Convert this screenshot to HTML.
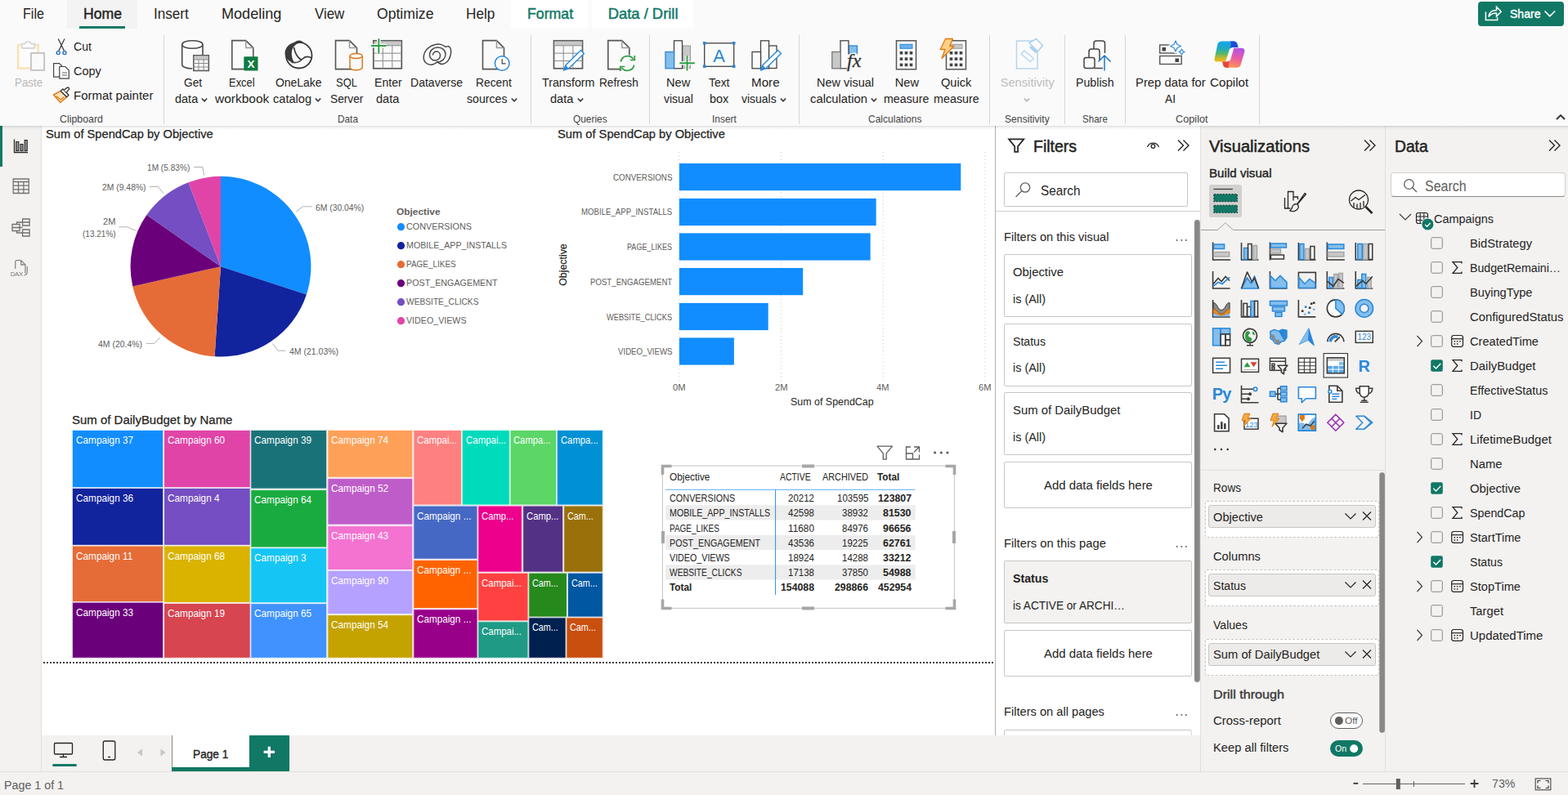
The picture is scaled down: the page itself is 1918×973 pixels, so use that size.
<!DOCTYPE html>
<html lang="en"><head><meta charset="utf-8"><title>Power BI Desktop</title>
<style>
html,body{margin:0;padding:0;}
body{width:1918px;height:973px;overflow:hidden;position:relative;background:#f3f2f1;font-family:"Liberation Sans",sans-serif;color:#252423;}
.b{position:absolute;display:block;}
.t{position:absolute;white-space:nowrap;line-height:1;transform-origin:0 0;}





</style></head>
<body>
<!-- ribbon -->
<div class="b" style="left:0px;top:0px;width:1918px;height:35px;background:#fafafa;"></div>
<div class="b" style="left:82px;top:0px;width:85.5px;height:35px;background:#f3f3f3;"></div>
<div class="b" style="left:625px;top:0px;width:94px;height:35px;background:#fff;"></div>
<div class="b" style="left:724px;top:0px;width:124px;height:35px;background:#fff;"></div>
<div class="b" style="left:0px;top:35px;width:1918px;height:119px;background:#fafafa;"></div>
<div class="t" style="left:28.3px;top:8px;font-size:18.4px;transform:scaleX(0.874);">File</div>
<div class="t" style="left:101.7px;top:8px;font-size:18.4px;-webkit-text-stroke:0.45px #252423;transform:scaleX(0.96);">Home</div>
<div class="b" style="left:97px;top:32.2px;width:56px;height:2.8px;background:#117865;"></div>
<div class="t" style="left:188px;top:8px;font-size:18.4px;transform:scaleX(0.928);">Insert</div>
<div class="t" style="left:271.3px;top:8px;font-size:18.4px;transform:scaleX(0.983);">Modeling</div>
<div class="t" style="left:384.7px;top:8px;font-size:18.4px;transform:scaleX(0.918);">View</div>
<div class="t" style="left:460.5px;top:8px;font-size:18.4px;transform:scaleX(0.957);">Optimize</div>
<div class="t" style="left:570px;top:8px;font-size:18.4px;transform:scaleX(0.933);">Help</div>
<div class="t" style="left:644.5px;top:8px;font-size:18.4px;color:#117865;-webkit-text-stroke:0.45px #117865;transform:scaleX(0.964);">Format</div>
<div class="t" style="left:743.7px;top:8px;font-size:18.4px;color:#117865;-webkit-text-stroke:0.45px #117865;">Data / Drill</div>
<div class="b" style="left:1807.7px;top:2px;width:105px;height:29.7px;background:#117865;border-radius:4px;"></div>
<div class="t" style="left:1846.8px;top:10px;font-size:14.8px;color:#fff;-webkit-text-stroke:0.4px #fff;transform:scaleX(0.949);">Share</div>
<svg class="b" style="left:1815px;top:4.5px;" width="22" height="22" viewBox="0 0 22 22"><path d="M2.400 9.500v10h14.300v-3.200M6 15.500c0.500-5 4-8 9.500-8v-4.200l5.700 5.900-5.700 5.900v-4.200c-4.500 0-7.500 1.500-9.500 4.600z" fill="none" stroke="#fff" stroke-width="1.500"/></svg>
<svg class="b" style="left:1888px;top:10px;" width="16" height="14" viewBox="0 0 16 14"><path d="M1.5 3.5l6.3 6.3 6.3-6.3" fill="none" stroke="#fff" stroke-width="1.7"/></svg>
<svg class="b" style="left:1902px;top:138px;" width="14" height="10" viewBox="0 0 14 10"><path d="M2 8l5-5 5 5" fill="none" stroke="#333" stroke-width="1.9"/></svg>
<div class="b" style="left:199.7px;top:42.5px;width:1px;height:109px;background:#d6d6d6;"></div>
<div class="b" style="left:649.2px;top:42.5px;width:1px;height:109px;background:#d6d6d6;"></div>
<div class="b" style="left:794px;top:42.5px;width:1px;height:109px;background:#d6d6d6;"></div>
<div class="b" style="left:977px;top:42.5px;width:1px;height:109px;background:#d6d6d6;"></div>
<div class="b" style="left:1209.8px;top:42.5px;width:1px;height:109px;background:#d6d6d6;"></div>
<div class="b" style="left:1302px;top:42.5px;width:1px;height:109px;background:#d6d6d6;"></div>
<div class="b" style="left:1375.8px;top:42.5px;width:1px;height:109px;background:#d6d6d6;"></div>
<div class="b" style="left:1539.7px;top:42.5px;width:1px;height:109px;background:#d6d6d6;"></div>
<div class="t" style="left:73.3px;top:139px;font-size:13.2px;color:#444;transform:scaleX(0.938);">Clipboard</div>
<div class="t" style="left:412.5px;top:139px;font-size:13.2px;color:#444;transform:scaleX(0.897);">Data</div>
<div class="t" style="left:700.85px;top:139px;font-size:13.2px;color:#444;transform:scaleX(0.902);">Queries</div>
<div class="t" style="left:871.35px;top:139px;font-size:13.2px;color:#444;transform:scaleX(0.906);">Insert</div>
<div class="t" style="left:1061.65px;top:139px;font-size:13.2px;color:#444;transform:scaleX(0.911);">Calculations</div>
<div class="t" style="left:1229.3px;top:139px;font-size:13.2px;color:#444;transform:scaleX(0.922);">Sensitivity</div>
<div class="t" style="left:1323.75px;top:139px;font-size:13.2px;color:#444;transform:scaleX(0.877);">Share</div>
<div class="t" style="left:1438.35px;top:139px;font-size:13.2px;color:#444;transform:scaleX(0.966);">Copilot</div>
<div class="t" style="left:90px;top:50px;font-size:14.7px;transform:scaleX(0.962);">Cut</div>
<div class="t" style="left:90px;top:80px;font-size:14.7px;transform:scaleX(0.985);">Copy</div>
<div class="t" style="left:90px;top:110px;font-size:14.7px;transform:scaleX(1.02);">Format painter</div>
<div class="t" style="left:18px;top:94px;font-size:14.7px;color:#b9b9b9;transform:scaleX(0.91);">Paste</div>
<div class="t" style="left:224.5px;top:94px;font-size:14.7px;transform:scaleX(0.937);">Get</div>
<div class="t" style="left:213.9px;top:114px;font-size:14.7px;transform:scaleX(0.986);">data</div>
<svg class="b" style="left:246.1px;top:118.5px;" width="8" height="7" viewBox="0 0 8 7"><path d="M0.8 1.5l3.2 3.3 3.2-3.3" fill="none" stroke="#333" stroke-width="1.5"/></svg>
<div class="t" style="left:279.95px;top:94px;font-size:14.7px;transform:scaleX(0.882);">Excel</div>
<div class="t" style="left:262.65px;top:114px;font-size:14.7px;transform:scaleX(1.054);">workbook</div>
<div class="t" style="left:337.2px;top:94px;font-size:14.7px;transform:scaleX(0.949);">OneLake</div>
<div class="t" style="left:334.25px;top:114px;font-size:14.7px;transform:scaleX(0.994);">catalog</div>
<svg class="b" style="left:385.35px;top:118.5px;" width="8" height="7" viewBox="0 0 8 7"><path d="M0.8 1.5l3.2 3.3 3.2-3.3" fill="none" stroke="#333" stroke-width="1.5"/></svg>
<div class="t" style="left:411.25px;top:94px;font-size:14.7px;transform:scaleX(0.881);">SQL</div>
<div class="t" style="left:404.25px;top:114px;font-size:14.7px;transform:scaleX(0.935);">Server</div>
<div class="t" style="left:457.95px;top:94px;font-size:14.7px;transform:scaleX(0.959);">Enter</div>
<div class="t" style="left:460.05px;top:114px;font-size:14.7px;transform:scaleX(0.989);">data</div>
<div class="t" style="left:502.15px;top:94px;font-size:14.7px;transform:scaleX(0.957);">Dataverse</div>
<div class="t" style="left:582.1px;top:94px;font-size:14.7px;transform:scaleX(0.94);">Recent</div>
<div class="t" style="left:571.25px;top:114px;font-size:14.7px;transform:scaleX(0.962);">sources</div>
<svg class="b" style="left:624.75px;top:118.5px;" width="8" height="7" viewBox="0 0 8 7"><path d="M0.8 1.5l3.2 3.3 3.2-3.3" fill="none" stroke="#333" stroke-width="1.5"/></svg>
<div class="t" style="left:662.55px;top:94px;font-size:14.7px;transform:scaleX(0.971);">Transform</div>
<div class="t" style="left:673.3px;top:114px;font-size:14.7px;transform:scaleX(0.993);">data</div>
<svg class="b" style="left:705.7px;top:118.5px;" width="8" height="7" viewBox="0 0 8 7"><path d="M0.8 1.5l3.2 3.3 3.2-3.3" fill="none" stroke="#333" stroke-width="1.5"/></svg>
<div class="t" style="left:733.1px;top:94px;font-size:14.7px;transform:scaleX(0.929);">Refresh</div>
<div class="t" style="left:815px;top:94px;font-size:14.7px;transform:scaleX(0.993);">New</div>
<div class="t" style="left:811.7px;top:114px;font-size:14.7px;transform:scaleX(0.953);">visual</div>
<div class="t" style="left:867.05px;top:94px;font-size:14.7px;transform:scaleX(0.946);">Text</div>
<div class="t" style="left:868.05px;top:114px;font-size:14.7px;transform:scaleX(0.983);">box</div>
<div class="t" style="left:918.7px;top:94px;font-size:14.7px;transform:scaleX(1.033);">More</div>
<div class="t" style="left:906.95px;top:114px;font-size:14.7px;transform:scaleX(0.95);">visuals</div>
<svg class="b" style="left:953.65px;top:118.5px;" width="8" height="7" viewBox="0 0 8 7"><path d="M0.8 1.5l3.2 3.3 3.2-3.3" fill="none" stroke="#333" stroke-width="1.5"/></svg>
<div class="t" style="left:998.7px;top:94px;font-size:14.7px;transform:scaleX(0.985);">New visual</div>
<div class="t" style="left:991.2px;top:114px;font-size:14.7px;transform:scaleX(1.008);">calculation</div>
<svg class="b" style="left:1065.2px;top:118.5px;" width="8" height="7" viewBox="0 0 8 7"><path d="M0.8 1.5l3.2 3.3 3.2-3.3" fill="none" stroke="#333" stroke-width="1.5"/></svg>
<div class="t" style="left:1094.65px;top:94px;font-size:14.7px;">New</div>
<div class="t" style="left:1081.3px;top:114px;font-size:14.7px;transform:scaleX(0.969);">measure</div>
<div class="t" style="left:1151.3px;top:94px;font-size:14.7px;transform:scaleX(0.995);">Quick</div>
<div class="t" style="left:1142.2px;top:114px;font-size:14.7px;transform:scaleX(0.976);">measure</div>
<div class="t" style="left:1316.2px;top:94px;font-size:14.7px;transform:scaleX(0.967);">Publish</div>
<div class="t" style="left:1389.1px;top:94px;font-size:14.7px;transform:scaleX(1.01);">Prep data for</div>
<div class="t" style="left:1425px;top:114px;font-size:14.7px;transform:scaleX(0.936);">AI</div>
<div class="t" style="left:1479.65px;top:94px;font-size:14.7px;transform:scaleX(1.034);">Copilot</div>
<div class="t" style="left:1223.65px;top:94px;font-size:14.7px;color:#bdbdbd;">Sensitivity</div>
<svg class="b" style="left:1252px;top:118.5px;" width="8" height="7" viewBox="0 0 8 7"><path d="M0.8 1.5l3.2 3.3 3.2-3.3" fill="none" stroke="#b0b0b0" stroke-width="1.5"/></svg>
<!-- icons -->
<svg class="b" style="left:0;top:0" width="1918" height="156" viewBox="0 0 1918 156"><rect x="22.3" y="55.2" width="24.2" height="28.2" fill="#fdfcfa" stroke="#fae6bd" stroke-width="2.4"/><rect x="21.4" y="54.3" width="26" height="30" fill="none" stroke="#f3c98a" stroke-width="0.7" stroke-dasharray="1 1"/><path d="M26.700 59v-5.300h4a3.600 3.600 0 0 1 7 0h4.500v5.300z" fill="#fafafa" stroke="#cdcdcd" stroke-width="1.300" stroke-linejoin="round"/><rect x="38" y="64.900" width="16.200" height="21" fill="#fafafa" stroke="#bfbfbf" stroke-width="1.700"/><path d="M71.300 47.500l7.200 14.700M79 47.500l-7.200 14.700" fill="none" stroke="#3b3b3b" stroke-width="1.300"/><circle cx="71.200" cy="64.600" r="2" fill="none" stroke="#1f6fc0" stroke-width="1.400"/><circle cx="79" cy="64.600" r="2" fill="none" stroke="#1f6fc0" stroke-width="1.400"/><path d="M65.6 77.6h7l3 3v13.5h-10z" fill="#fafafa" stroke="#444" stroke-width="1.2"/><path d="M72.8 81.5h7l4.5 4.5v10.2h-11.5z" fill="#fafafa" stroke="#444" stroke-width="1.2"/><path d="M76 89h6M76 92h6" stroke="#666" stroke-width="1"/><path d="M65.500 116l8.700-4.600 7.400 7.300-7.700 6.800z" fill="#fce3bd" stroke="#e07a10" stroke-width="1.500" stroke-linejoin="round"/><path d="M68.500 117.500l6 4.500 4-3.500" fill="none" stroke="#e07a10" stroke-width="1.200"/><path d="M74.200 111.200l2.800-2.300 7 7.300-2.400 2.600z" fill="#fafafa" stroke="#3b3b3b" stroke-width="1.400" stroke-linejoin="round"/><path d="M78.300 110.300l3.600-2.900a1.500 1.500 0 0 1 2.200 2.300l-3 3.400" fill="#fafafa" stroke="#3b3b3b" stroke-width="1.400" stroke-linejoin="round"/><path d="M222.700 54.500v24.500c0 2.800 5.400 5 12.500 5M248 54.500v13" fill="none" stroke="#4a4a4a" stroke-width="1.600"/><ellipse cx="235.350" cy="54.500" rx="12.650" ry="4.800" fill="#fafafa" stroke="#4a4a4a" stroke-width="1.600"/><rect x="236.8" y="67.8" width="18.5" height="18.7" fill="#fafafa" stroke="#5a5a5a" stroke-width="1.6"/><rect x="237.8" y="68.8" width="16.5" height="4.2" fill="#c8c8c8"/><path d="M236.8 73h18.5M236.8 77.5h18.5M236.8 82h18.5M242.97 73v13.5M249.13 73v13.5" fill="none" stroke="#8a8a8a" stroke-width="1"/><path d="M283.8 49.6h17l9 9v26h-26z" fill="#fafafa" stroke="#555" stroke-width="1.6"/><path d="M300.8 49.6v9h9" fill="none" stroke="#9a9a9a" stroke-width="1.5"/><rect x="298.3" y="69.3" width="17.2" height="17.2" rx="1" fill="#107c41"/><text x="306.9" y="83" font-family="Liberation Sans,sans-serif" font-size="13.5" font-weight="700" fill="#fff" text-anchor="middle">X</text><circle cx="365.700" cy="67.700" r="15.800" fill="#fafafa" stroke="#3a3a3a" stroke-width="1.800"/><path d="M360 52c3-3.500 9-3.500 11.500 0.500-7-1-13 3-14.500 10-1 5 0.500 10 3 14.500-5-1-11.500-5-11.500-11.500 0-7 5-12 11.500-13.500z" fill="#3a3a3a"/><path d="M359.500 58c1.500 8 4 12.500 9.500 15.500" fill="none" stroke="#3a3a3a" stroke-width="1.600"/><path d="M356.500 76c5 1.500 9.500 0 13-3.500 3.500-3.500 7.500-4 11.500-1.500" fill="none" stroke="#3a3a3a" stroke-width="1.600"/><path d="M410.5 49.6h17l9 9v26h-26z" fill="#fafafa" stroke="#555" stroke-width="1.6"/><path d="M427.5 49.6v9h9" fill="none" stroke="#9a9a9a" stroke-width="1.5"/><path d="M428 68.500v14c0 1.800 3.400 3.200 7.600 3.200s7.600-1.400 7.600-3.200v-14" fill="#fafafa" stroke="#d9730d" stroke-width="1.4"/><ellipse cx="435.600" cy="68.500" rx="7.600" ry="3" fill="#fafafa" stroke="#d9730d" stroke-width="1.4"/><rect x="456.8" y="49.8" width="34.5" height="34" fill="#fafafa" stroke="#5a5a5a" stroke-width="1.7"/><rect x="457.8" y="50.8" width="32.5" height="5" fill="#c8c8c8"/><path d="M456.8 55.8h34.5M456.8 65.13h34.5M456.8 74.47h34.5M468.3 55.8v28M479.8 55.8v28" fill="none" stroke="#8a8a8a" stroke-width="1"/><path d="M463.300 47.200v18.600M454 56h18.600" stroke="#fafafa" stroke-width="4.600" fill="none"/><path d="M463.300 47.200v18.600M454 56h18.600" stroke="#2f9e44" stroke-width="1.900" fill="none"/><path d="M545.500 57.500c4.500-3 7.500 2.500 5.500 10.500-2 7.500-7.500 12-12.500 10-2.500-1-3.500-2.500-3.500-2.500-3 3.500-8.500 5-12.500 2.500-6-3.500-5.500-12 0-18 5-5.500 14-7.500 19.500-4.500 1.500 0.800 2.500 1.500 3.500 2z" fill="none" stroke="#444" stroke-width="1.400" stroke-linejoin="round"/><path d="M535 76c5.500 0 10-4.500 10-9.500 0-5-4-8.500-9.500-8.500s-10 4-10 9c0 4 3 7 6.500 7 3.500 0 6.500-2.500 6.500-6 0-3-2-5-4.500-5s-4.500 2-4.500 4" fill="none" stroke="#444" stroke-width="1.400" stroke-linecap="round"/><path d="M590.5 49.6h17l9 9v26h-26z" fill="#fafafa" stroke="#555" stroke-width="1.6"/><path d="M607.5 49.6v9h9" fill="none" stroke="#9a9a9a" stroke-width="1.5"/><circle cx="614.200" cy="77.500" r="8.800" fill="#fff" stroke="#2b88d8" stroke-width="1.5"/><path d="M614.200 72v5.800h4.500" fill="none" stroke="#444" stroke-width="1.2"/><rect x="677.5" y="49.8" width="35" height="34" fill="#fafafa" stroke="#5a5a5a" stroke-width="1.7"/><rect x="678.5" y="50.8" width="33" height="5" fill="#c8c8c8"/><path d="M677.5 55.8h35M677.5 65.13h35M677.5 74.47h35M689.17 55.8v28M700.83 55.8v28" fill="none" stroke="#8a8a8a" stroke-width="1"/><path d="M689.5 86 L695.71 83.77 L714.42 65.47 L710.58 61.53 L691.87 79.84z" fill="#fff" stroke="#2b88d8" stroke-width="1.4" stroke-linejoin="round"/><path d="M689.5 86L695.71 83.77L691.87 79.84z" fill="#2b88d8"/><path d="M743.8 49.6h17l9 9v26h-26z" fill="#fafafa" stroke="#555" stroke-width="1.6"/><path d="M760.8 49.6v9h9" fill="none" stroke="#9a9a9a" stroke-width="1.5"/><circle cx="767.500" cy="77.500" r="10.500" fill="#fafafa"/><path d="M759.300 75.500a8.500 8.500 0 0 1 15.500-3M775.700 79.500a8.500 8.500 0 0 1-15.500 3" fill="none" stroke="#2f9e44" stroke-width="1.7"/><path d="M776.300 68v5.500h-5.500M758.700 87v-5.500h5.500" fill="none" stroke="#2f9e44" stroke-width="1.7"/><rect x="835" y="56" width="9.500" height="27.500" fill="#c8c8c8" stroke="#9a9a9a" stroke-width="1"/><rect x="824.500" y="49.800" width="10" height="34" fill="#fafafa" stroke="#444" stroke-width="1.3"/><rect x="814" y="63.500" width="10.500" height="20.300" fill="#83beec" stroke="#2b88d8" stroke-width="1.3"/><path d="M840.500 68v18.500M831.300 77.300h18.500" stroke="#fafafa" stroke-width="4.400" fill="none"/><path d="M840.500 68v18.500M831.300 77.300h18.500" stroke="#2f9e44" stroke-width="1.900" fill="none"/><rect x="861.700" y="52.800" width="36" height="28.500" fill="#fafafa" stroke="#444" stroke-width="1.3"/><rect x="859.9" y="51" width="3.600" height="3.600" fill="#2b88d8"/><rect x="895.9" y="51" width="3.600" height="3.600" fill="#2b88d8"/><rect x="859.9" y="79.5" width="3.600" height="3.600" fill="#2b88d8"/><rect x="895.9" y="79.5" width="3.600" height="3.600" fill="#2b88d8"/><text x="879.700" y="75.500" font-family="Liberation Sans,sans-serif" font-size="22" fill="#2b88d8" text-anchor="middle">A</text><rect x="940.500" y="56" width="9.500" height="27.500" fill="#fafafa" stroke="#444" stroke-width="1.3"/><rect x="930.500" y="49.800" width="10" height="34" fill="#fafafa" stroke="#444" stroke-width="1.3"/><rect x="920" y="63.500" width="10.500" height="20.300" fill="#fafafa" stroke="#444" stroke-width="1.3"/><path d="M930.5 86 L936.71 83.77 L955.42 65.47 L951.58 61.53 L932.87 79.84z" fill="#fff" stroke="#2b88d8" stroke-width="1.4" stroke-linejoin="round"/><path d="M930.5 86L936.71 83.77L932.87 79.84z" fill="#2b88d8"/><rect x="1038" y="56" width="10.500" height="27.500" fill="#83beec" stroke="#2b88d8" stroke-width="1.3"/><rect x="1028" y="49.800" width="10" height="34" fill="#fafafa" stroke="#444" stroke-width="1.3"/><rect x="1017.800" y="63.500" width="10.500" height="20.300" fill="#c8c8c8" stroke="#777" stroke-width="1.3"/><rect x="1036" y="66.500" width="18" height="20" fill="#fafafa"/><path d="M1039 66.500q5-3.500 9.500-0.500v1.500h-9.500z" fill="#fafafa"/><text x="1036" y="81.800" font-family="Liberation Serif,serif" font-style="italic" font-size="24" fill="#333" stroke="#333" stroke-width="0.300">fx</text><rect x="1096.5" y="49.8" width="24" height="35" fill="#fafafa" stroke="#555" stroke-width="1.5"/><rect x="1101" y="54.3" width="15" height="5" fill="#6cb0ee" stroke="#2b88d8" stroke-width="1"/><rect x="1100.7" y="63" width="3.6" height="3.6" fill="#444"/><rect x="1106.7" y="63" width="3.6" height="3.6" fill="#444"/><rect x="1112.7" y="63" width="3.6" height="3.6" fill="#444"/><rect x="1100.7" y="70.3" width="3.6" height="3.6" fill="#444"/><rect x="1106.7" y="70.3" width="3.6" height="3.6" fill="#444"/><rect x="1112.7" y="70.3" width="3.6" height="3.6" fill="#444"/><rect x="1100.7" y="77.6" width="3.6" height="3.6" fill="#444"/><rect x="1106.7" y="77.6" width="3.6" height="3.6" fill="#444"/><rect x="1112.7" y="77.6" width="3.6" height="3.6" fill="#444"/><rect x="1157.5" y="49.8" width="24" height="35" fill="#fafafa" stroke="#555" stroke-width="1.5"/><rect x="1162" y="54.3" width="15" height="5" fill="#c8c8c8" stroke="#9a9a9a" stroke-width="1"/><rect x="1161.7" y="63" width="3.6" height="3.6" fill="#444"/><rect x="1167.7" y="63" width="3.6" height="3.6" fill="#444"/><rect x="1173.7" y="63" width="3.6" height="3.6" fill="#444"/><rect x="1161.7" y="70.3" width="3.6" height="3.6" fill="#444"/><rect x="1167.7" y="70.3" width="3.6" height="3.6" fill="#444"/><rect x="1173.7" y="70.3" width="3.6" height="3.6" fill="#444"/><rect x="1161.7" y="77.6" width="3.6" height="3.6" fill="#444"/><rect x="1167.7" y="77.6" width="3.6" height="3.6" fill="#444"/><rect x="1173.7" y="77.6" width="3.6" height="3.6" fill="#444"/><path d="M1156.500 47.500h9l-3.800 9h5.300l-15 15 4-11h-5.800z" fill="#fbcf85" stroke="#e07a10" stroke-width="1.300" stroke-linejoin="round"/><rect x="1243.500" y="50" width="25.500" height="34" fill="#fafafa" stroke="#b5d6f2" stroke-width="1.5"/><path d="M1249 66l4-4 11.500 9.500-4 4z" fill="#fafafa" stroke="#b5d6f2" stroke-width="1.3"/><path d="M1259 52.500l8.500-5 8 8-6 7.500z" fill="#fafafa" stroke="#a9cff0" stroke-width="1.5"/><path d="M1260 57l8 7" stroke="#a9cff0" stroke-width="3"/><path d="M1338 74v-21a3 3 0 0 1 3-3h7.500a3 3 0 0 1 3 3v12" fill="none" stroke="#444" stroke-width="1.5"/><path d="M1332 71v-8a3 3 0 0 1 3-3h7a3 3 0 0 1 3 3v11" fill="#fafafa" stroke="#444" stroke-width="1.5"/><rect x="1326" y="70.500" width="13" height="13" rx="2.500" fill="#fafafa" stroke="#444" stroke-width="1.5"/><path d="M1339 83.500h10" stroke="#444" stroke-width="1.5"/><path d="M1351 86.500v-18.500M1343.500 75.500l7.500-7.500 7.500 7.500" fill="none" stroke="#1f77c4" stroke-width="1.5"/><rect x="1418.700" y="55" width="20" height="10" fill="#fafafa" stroke="#555" stroke-width="1.4"/><rect x="1421.500" y="58" width="4.500" height="4.500" fill="#444"/><rect x="1418.700" y="68.500" width="26.500" height="10" fill="#fafafa" stroke="#555" stroke-width="1.4"/><rect x="1437.500" y="71.500" width="4.500" height="4.500" fill="#444"/><path d="M1438 50l2 4.500 4.500 2-4.500 2-2 4.500-2-4.500-4.500-2 4.500-2z" fill="#fafafa" stroke="#fafafa" stroke-width="4.500" stroke-linejoin="round"/><path d="M1446 58.500v8" stroke="#fafafa" stroke-width="4"/><path d="M1438 50l2 4.500 4.500 2-4.500 2-2 4.500-2-4.500-4.500-2 4.500-2z" fill="#fafafa" stroke="#2b88d8" stroke-width="1.2" stroke-linejoin="round"/><path d="M1445.500 60l1.200 2.300 2.300 1.200-2.300 1.200-1.200 2.300-1.200-2.300-2.300-1.200 2.300-1.200z" fill="#fafafa" stroke="#2b88d8" stroke-width="1.100" stroke-linejoin="round"/><defs><linearGradient id="cp1" x1="0" y1="0" x2="0" y2="1"><stop offset="0" stop-color="#18a4ee"/><stop offset=".35" stop-color="#1fa9c4"/><stop offset=".6" stop-color="#52b96a"/><stop offset=".85" stop-color="#d4b822"/><stop offset="1" stop-color="#f0b81e"/></linearGradient><linearGradient id="cp2" x1="0.6" y1="0" x2="0.3" y2="1"><stop offset="0" stop-color="#b554e4"/><stop offset=".45" stop-color="#e85aa6"/><stop offset="1" stop-color="#ff9a4a"/></linearGradient></defs><path d="M1489.500 53.500Q1491 50.500 1494.500 50.500H1509Q1512.500 50.500 1513.500 54L1514.500 58H1508Q1504.500 58 1503.500 61.500L1500 73Q1499.300 75.500 1496.500 75.500H1489Q1484.500 75.500 1485.800 71Z" fill="url(#cp1)"/><path d="M1505 50.500H1509Q1512.500 50.500 1513.500 54L1514.500 58H1508Q1506 58 1504.800 59.200Q1506.500 54 1505 50.500Z" fill="#1d4bd8"/><path d="M1509 58.800H1518Q1523.500 58.800 1522.300 63.500L1518 78.500Q1516.800 82.800 1512.500 82.800H1500.500Q1497 82.800 1496.200 79.500L1495.300 75.500H1501Q1504.500 75.500 1505.500 72L1508.700 61Q1509.200 59.500 1509 58.800Z" fill="url(#cp2)"/><path d="M1495.300 75.500H1501Q1503 75.500 1504.300 74.300Q1502 79 1503 82.800H1500.500Q1497 82.800 1496.200 79.500Z" fill="#e9443c"/></svg>
<!-- canvas -->
<div class="b" style="left:0px;top:154px;width:50px;height:791px;background:#f3f2f1;"></div>
<div class="b" style="left:50px;top:154px;width:1px;height:791px;background:#e1dfdd;"></div>
<div class="b" style="left:0px;top:154px;width:3px;height:50px;background:#117865;"></div>
<div class="b" style="left:51px;top:154px;width:1166px;height:746px;background:#fff;"></div>
<svg class="b" style="left:0;top:156px" width="52" height="200" viewBox="0 156 52 200"><path d="M17.500 170.500v16h16.500" fill="none" stroke="#252423" stroke-width="1.3"/><path d="M19.800 173.500h3v11h-3zM25 176.500h3v8h-3zM30.200 171.500h3v13h-3z" fill="#9a9a9a" stroke="#252423" stroke-width="1.100"/><path d="M16.200 219h19v17.500h-19zM16.200 222.500h19M16.200 227.200h19M16.200 231.800h19M22.500 222.500v14M28.900 222.500v14" fill="none" stroke="#737170" stroke-width="1.300"/><path d="M27.600 268h8.500v8h-8.500zM27.600 281h8.500v8h-8.500zM15 274.500h9v8h-9zM24 278.500h3.600M20.500 274.500v-2.500h7.100M20.500 282.500v2.500h7.100M15 278.500h9M27.600 272h8.500M27.600 285h8.500" fill="none" stroke="#737170" stroke-width="1.300"/><path d="M18.700 329v-8.300a2 2 0 0 1 2-2h5l5.300 5.300v10.500M25.700 318.700v5.300h5.300" fill="none" stroke="#8a8886" stroke-width="1.300"/><path d="M33.300 326v6.500a4.500 4.500 0 0 1-3.800 4.500" fill="none" stroke="#8a8886" stroke-width="1.200"/><text x="12.700" y="337.800" font-family="Liberation Sans,sans-serif" font-size="7.800" fill="#7a7876" letter-spacing="-0.200">DAX</text></svg>
<div class="t" style="left:55.9px;top:156px;font-size:15.4px;-webkit-text-stroke:0.25px #252423;transform:scaleX(0.953);">Sum of SpendCap by Objective</div>
<svg class="b" style="left:52px;top:156px" width="600" height="340" viewBox="52 156 600 340"><path d="M270 326.2L270 215.8A110.4 110.4 0 0 1 374.9 360.6z" fill="#118DFF"/><path d="M270 326.2L374.9 360.6A110.4 110.4 0 0 1 262.55 436.35z" fill="#12239E"/><path d="M270 326.2L262.55 436.35A110.4 110.4 0 0 1 162.29 350.44z" fill="#E66C37"/><path d="M270 326.2L162.29 350.44A110.4 110.4 0 0 1 179.43 263.07z" fill="#6B007B"/><path d="M270 326.2L179.43 263.07A110.4 110.4 0 0 1 230.45 223.13z" fill="#744EC2"/><path d="M270 326.2L230.45 223.13A110.4 110.4 0 0 1 270 215.8z" fill="#E044A7"/><path d="M237 204.5L247.8 204.5L249.6 214.6" fill="none" stroke="#b3b0ad" stroke-width="1"/><path d="M183 228.5L193.5 228.5L200.2 237" fill="none" stroke="#b3b0ad" stroke-width="1"/><path d="M145.4 277.7L155.4 277.7L166.2 282.2" fill="none" stroke="#b3b0ad" stroke-width="1"/><path d="M362.3 259.2L370.4 252.8L381.6 252.8" fill="none" stroke="#b3b0ad" stroke-width="1"/><path d="M333.4 420.4L340.2 429.2L349.4 429.2" fill="none" stroke="#b3b0ad" stroke-width="1"/><path d="M196 412.9L188.6 420.4L178.8 420.4" fill="none" stroke="#b3b0ad" stroke-width="1"/><circle cx="490.500" cy="277.7" r="4.600" fill="#118DFF"/><circle cx="490.500" cy="300.7" r="4.600" fill="#12239E"/><circle cx="490.500" cy="323.7" r="4.600" fill="#E66C37"/><circle cx="490.500" cy="346.7" r="4.600" fill="#6B007B"/><circle cx="490.500" cy="369.7" r="4.600" fill="#744EC2"/><circle cx="490.500" cy="392.7" r="4.600" fill="#E044A7"/></svg>
<div class="t" style="left:179.8px;top:200px;font-size:10.8px;color:#605e5c;transform:scaleX(0.937);">1M (5.83%)</div>
<div class="t" style="left:125.1px;top:224px;font-size:10.8px;color:#605e5c;transform:scaleX(0.96);">2M (9.48%)</div>
<div class="t" style="left:125.8px;top:266px;font-size:10.8px;color:#605e5c;transform:scaleX(1.026);">2M</div>
<div class="t" style="left:100.5px;top:281px;font-size:10.8px;color:#605e5c;transform:scaleX(0.929);">(13.21%)</div>
<div class="t" style="left:385.7px;top:249px;font-size:10.8px;color:#605e5c;transform:scaleX(0.959);">6M (30.04%)</div>
<div class="t" style="left:354.1px;top:425px;font-size:10.8px;color:#605e5c;transform:scaleX(0.972);">4M (21.03%)</div>
<div class="t" style="left:120.4px;top:416px;font-size:10.8px;color:#605e5c;transform:scaleX(0.967);">4M (20.4%)</div>
<div class="t" style="left:485.1px;top:254px;font-size:11.8px;color:#605e5c;font-weight:700;transform:scaleX(1.009);">Objective</div>
<div class="t" style="left:497.3px;top:272px;font-size:11.8px;color:#605e5c;transform:scaleX(0.917);">CONVERSIONS</div>
<div class="t" style="left:497.3px;top:295px;font-size:11.8px;color:#605e5c;transform:scaleX(0.904);">MOBILE_APP_INSTALLS</div>
<div class="t" style="left:497.3px;top:318px;font-size:11.8px;color:#605e5c;transform:scaleX(0.844);">PAGE_LIKES</div>
<div class="t" style="left:497.3px;top:341px;font-size:11.8px;color:#605e5c;transform:scaleX(0.91);">POST_ENGAGEMENT</div>
<div class="t" style="left:497.3px;top:364px;font-size:11.8px;color:#605e5c;transform:scaleX(0.865);">WEBSITE_CLICKS</div>
<div class="t" style="left:497.3px;top:387px;font-size:11.8px;color:#605e5c;transform:scaleX(0.905);">VIDEO_VIEWS</div>
<div class="t" style="left:681.8px;top:156px;font-size:15.4px;-webkit-text-stroke:0.25px #252423;transform:scaleX(0.954);">Sum of SpendCap by Objective</div>
<svg class="b" style="left:660px;top:156px" width="557" height="344" viewBox="660 156 557 344"><path d="M830.9 186V466" stroke="#c8c6c4" stroke-width="1" stroke-dasharray="1 3.500" fill="none"/><path d="M955.6 186V466" stroke="#c8c6c4" stroke-width="1" stroke-dasharray="1 3.500" fill="none"/><path d="M1080.2 186V466" stroke="#c8c6c4" stroke-width="1" stroke-dasharray="1 3.500" fill="none"/><path d="M1204.9 186V466" stroke="#c8c6c4" stroke-width="1" stroke-dasharray="1 3.500" fill="none"/><rect x="830.900" y="200" width="344.4" height="33.200" fill="#118DFF"/><rect x="830.900" y="242.9" width="240.8" height="33.200" fill="#118DFF"/><rect x="830.900" y="285.4" width="233.8" height="33.200" fill="#118DFF"/><rect x="830.900" y="328" width="151.3" height="33.200" fill="#118DFF"/><rect x="830.900" y="370.9" width="108.8" height="33.200" fill="#118DFF"/><rect x="830.900" y="413.4" width="67" height="33.200" fill="#118DFF"/></svg>
<div class="t" style="left:749.9px;top:212px;font-size:11.3px;color:#605e5c;transform:scaleX(0.868);">CONVERSIONS</div>
<div class="t" style="left:711.1px;top:254px;font-size:11.3px;color:#605e5c;transform:scaleX(0.853);">MOBILE_APP_INSTALLS</div>
<div class="t" style="left:767.3px;top:297px;font-size:11.3px;color:#605e5c;transform:scaleX(0.8);">PAGE_LIKES</div>
<div class="t" style="left:722.1px;top:340px;font-size:11.3px;color:#605e5c;transform:scaleX(0.854);">POST_ENGAGEMENT</div>
<div class="t" style="left:742.3px;top:383px;font-size:11.3px;color:#605e5c;transform:scaleX(0.818);">WEBSITE_CLICKS</div>
<div class="t" style="left:755.8px;top:425px;font-size:11.3px;color:#605e5c;transform:scaleX(0.855);">VIDEO_VIEWS</div>
<div class="t" style="left:823.15px;top:469px;font-size:11.3px;color:#605e5c;transform:scaleX(0.987);">0M</div>
<div class="t" style="left:947.85px;top:469px;font-size:11.3px;color:#605e5c;transform:scaleX(0.987);">2M</div>
<div class="t" style="left:1072.45px;top:469px;font-size:11.3px;color:#605e5c;transform:scaleX(0.987);">4M</div>
<div class="t" style="left:1197.15px;top:469px;font-size:11.3px;color:#605e5c;transform:scaleX(0.987);">6M</div>
<div class="t" style="left:966.65px;top:486px;font-size:12.6px;transform:scaleX(0.988);">Sum of SpendCap</div>
<div class="t" style="left:688.500px;top:324.200px;font-size:12.600px;transform-origin:50% 50%;transform:translate(-50%,-50%) rotate(-90deg) scaleX(0.98);-webkit-text-stroke:0.2px #252423;">Objective</div>
<div class="t" style="left:88.3px;top:506px;font-size:15.4px;-webkit-text-stroke:0.25px #252423;transform:scaleX(0.973);">Sum of DailyBudget by Name</div>
<svg class="b" style="left:85px;top:522px" width="656" height="286" viewBox="85 522 656 286"><rect x="87.7" y="525.7" width="112.7" height="71.8" fill="#d4eaff"/><rect x="89" y="527" width="110.1" height="69.2" fill="#118DFF"/><rect x="87.7" y="596.7" width="112.7" height="71.4" fill="#d4d7ed"/><rect x="89" y="598" width="110.1" height="68.8" fill="#12239E"/><rect x="87.7" y="667.3" width="112.7" height="70" fill="#fae4db"/><rect x="89" y="668.6" width="110.1" height="67.4" fill="#E66C37"/><rect x="87.7" y="736.4" width="112.7" height="69.7" fill="#e4d1e7"/><rect x="89" y="737.7" width="110.1" height="67.1" fill="#6B007B"/><rect x="199.8" y="525.7" width="107.2" height="71.8" fill="#f9ddef"/><rect x="201.1" y="527" width="104.6" height="69.2" fill="#E044A7"/><rect x="199.8" y="596.7" width="107.2" height="71.4" fill="#e5dff4"/><rect x="201.1" y="598" width="104.6" height="68.8" fill="#744EC2"/><rect x="199.8" y="667.3" width="107.2" height="70.9" fill="#f8f1d1"/><rect x="201.1" y="668.6" width="104.6" height="68.3" fill="#D9B300"/><rect x="199.8" y="737.7" width="107.2" height="68.4" fill="#f7dddf"/><rect x="201.1" y="739" width="104.6" height="65.8" fill="#D64550"/><rect x="306" y="525.7" width="94.4" height="73.2" fill="#d5e5e6"/><rect x="307.3" y="527" width="91.8" height="70.6" fill="#197278"/><rect x="306" y="598.8" width="94.4" height="71.9" fill="#d5efdc"/><rect x="307.3" y="600.1" width="91.8" height="69.3" fill="#1AAB40"/><rect x="306" y="670" width="94.4" height="68.5" fill="#d4f4fd"/><rect x="307.3" y="671.3" width="91.8" height="65.9" fill="#15C6F4"/><rect x="306" y="737.9" width="94.4" height="68.2" fill="#dcebff"/><rect x="307.3" y="739.2" width="91.8" height="65.6" fill="#4092FF"/><rect x="400.1" y="525.7" width="105.4" height="59.4" fill="#ffede0"/><rect x="401.4" y="527" width="102.8" height="56.8" fill="#FFA058"/><rect x="400.1" y="584.8" width="105.4" height="58.1" fill="#f3e1f5"/><rect x="401.4" y="586.1" width="102.8" height="55.5" fill="#BE5DC9"/><rect x="400.1" y="642.8" width="105.4" height="55.5" fill="#fde5f6"/><rect x="401.4" y="644.1" width="102.8" height="52.9" fill="#F472D0"/><rect x="400.1" y="697.5" width="105.4" height="54.8" fill="#f1eeff"/><rect x="401.4" y="698.8" width="102.8" height="52.2" fill="#B5A1FF"/><rect x="400.1" y="751.9" width="105.4" height="54.2" fill="#f4eed1"/><rect x="401.4" y="753.2" width="102.8" height="51.6" fill="#C4A200"/><rect x="505.1" y="525.7" width="60.2" height="93.1" fill="#ffe8e8"/><rect x="506.4" y="527" width="57.6" height="90.5" fill="#FF8080"/><rect x="564.5" y="525.7" width="59.6" height="93.1" fill="#d1f8f2"/><rect x="565.8" y="527" width="57" height="90.5" fill="#00DBBC"/><rect x="623.3" y="525.7" width="58.1" height="93.1" fill="#e1f7e3"/><rect x="624.6" y="527" width="55.5" height="90.5" fill="#5BD667"/><rect x="680.6" y="525.7" width="57.5" height="93.1" fill="#d1ebf7"/><rect x="681.9" y="527" width="54.9" height="90.5" fill="#0091D5"/><rect x="505.1" y="618.3" width="79.7" height="66.7" fill="#dde3f4"/><rect x="506.4" y="619.6" width="77.1" height="64.1" fill="#4668C5"/><rect x="505.1" y="684.7" width="79.7" height="60.6" fill="#ffe2d1"/><rect x="506.4" y="686" width="77.1" height="58" fill="#FF6300"/><rect x="505.1" y="745" width="79.7" height="61.1" fill="#ecd1e9"/><rect x="506.4" y="746.3" width="77.1" height="58.5" fill="#99008A"/><rect x="584" y="618.3" width="55.2" height="82.6" fill="#fbd1ea"/><rect x="585.3" y="619.6" width="52.6" height="80" fill="#EC008C"/><rect x="638.9" y="618.3" width="50.5" height="82.6" fill="#e0dae9"/><rect x="640.2" y="619.6" width="47.9" height="80" fill="#533285"/><rect x="688.9" y="618.3" width="49.2" height="82.6" fill="#ece5d2"/><rect x="690.2" y="619.6" width="46.6" height="80" fill="#99700A"/><rect x="584" y="700.5" width="62.8" height="60.2" fill="#ffdcdc"/><rect x="585.3" y="701.8" width="60.2" height="57.6" fill="#FF4141"/><rect x="584" y="760" width="62.8" height="46.1" fill="#d6ece9"/><rect x="585.3" y="761.3" width="60.2" height="43.5" fill="#1F9A85"/><rect x="646" y="700.5" width="48.2" height="55.4" fill="#d7e9d6"/><rect x="647.3" y="701.8" width="45.6" height="52.8" fill="#25891C"/><rect x="693.7" y="700.5" width="44.4" height="55.4" fill="#d1e0ee"/><rect x="695" y="701.8" width="41.8" height="52.8" fill="#0057A2"/><rect x="646" y="755.1" width="46.9" height="51" fill="#d1d6df"/><rect x="647.3" y="756.4" width="44.3" height="48.4" fill="#002050"/><rect x="692.1" y="755.1" width="46" height="51" fill="#f5dfd3"/><rect x="693.4" y="756.4" width="43.4" height="48.4" fill="#C94F0F"/></svg>
<div class="t" style="left:92.7px;top:533px;font-size:12.2px;color:#fff;transform:scaleX(0.967);">Campaign 37</div>
<div class="t" style="left:92.7px;top:604px;font-size:12.2px;color:#fff;transform:scaleX(0.967);">Campaign 36</div>
<div class="t" style="left:92.7px;top:675px;font-size:12.2px;color:#fff;transform:scaleX(0.967);">Campaign 11</div>
<div class="t" style="left:92.7px;top:744px;font-size:12.2px;color:#fff;transform:scaleX(0.967);">Campaign 33</div>
<div class="t" style="left:204.8px;top:533px;font-size:12.2px;color:#fff;transform:scaleX(0.967);">Campaign 60</div>
<div class="t" style="left:204.8px;top:604px;font-size:12.2px;color:#fff;transform:scaleX(0.967);">Campaign 4</div>
<div class="t" style="left:204.8px;top:675px;font-size:12.2px;color:#fff;transform:scaleX(0.967);">Campaign 68</div>
<div class="t" style="left:204.8px;top:745px;font-size:12.2px;color:#fff;transform:scaleX(0.967);">Campaign 19</div>
<div class="t" style="left:311px;top:533px;font-size:12.2px;color:#fff;transform:scaleX(0.967);">Campaign 39</div>
<div class="t" style="left:311px;top:606px;font-size:12.2px;color:#fff;transform:scaleX(0.967);">Campaign 64</div>
<div class="t" style="left:311px;top:677px;font-size:12.2px;color:#fff;transform:scaleX(0.967);">Campaign 3</div>
<div class="t" style="left:311px;top:745px;font-size:12.2px;color:#fff;transform:scaleX(0.967);">Campaign 65</div>
<div class="t" style="left:405.1px;top:533px;font-size:12.2px;color:#fff;transform:scaleX(0.967);">Campaign 74</div>
<div class="t" style="left:405.1px;top:592px;font-size:12.2px;color:#fff;transform:scaleX(0.967);">Campaign 52</div>
<div class="t" style="left:405.1px;top:650px;font-size:12.2px;color:#fff;transform:scaleX(0.967);">Campaign 43</div>
<div class="t" style="left:405.1px;top:705px;font-size:12.2px;color:#fff;transform:scaleX(0.967);">Campaign 90</div>
<div class="t" style="left:405.1px;top:759px;font-size:12.2px;color:#fff;transform:scaleX(0.967);">Campaign 54</div>
<div class="t" style="left:510.1px;top:533px;font-size:12.2px;color:#fff;transform:scaleX(0.939);">Campai...</div>
<div class="t" style="left:569.5px;top:533px;font-size:12.2px;color:#fff;transform:scaleX(0.939);">Campai...</div>
<div class="t" style="left:628.3px;top:533px;font-size:12.2px;color:#fff;transform:scaleX(0.923);">Campa...</div>
<div class="t" style="left:685.6px;top:533px;font-size:12.2px;color:#fff;transform:scaleX(0.923);">Campa...</div>
<div class="t" style="left:510.1px;top:626px;font-size:12.2px;color:#fff;transform:scaleX(0.961);">Campaign ...</div>
<div class="t" style="left:510.1px;top:692px;font-size:12.2px;color:#fff;transform:scaleX(0.961);">Campaign ...</div>
<div class="t" style="left:510.1px;top:752px;font-size:12.2px;color:#fff;transform:scaleX(0.961);">Campaign ...</div>
<div class="t" style="left:589px;top:626px;font-size:12.2px;color:#fff;transform:scaleX(0.925);">Camp...</div>
<div class="t" style="left:643.9px;top:626px;font-size:12.2px;color:#fff;transform:scaleX(0.925);">Camp...</div>
<div class="t" style="left:693.9px;top:626px;font-size:12.2px;color:#fff;transform:scaleX(0.888);">Cam...</div>
<div class="t" style="left:589px;top:708px;font-size:12.2px;color:#fff;transform:scaleX(0.939);">Campai...</div>
<div class="t" style="left:589px;top:767px;font-size:12.2px;color:#fff;transform:scaleX(0.939);">Campai...</div>
<div class="t" style="left:651px;top:708px;font-size:12.2px;color:#fff;transform:scaleX(0.888);">Cam...</div>
<div class="t" style="left:698.7px;top:708px;font-size:12.2px;color:#fff;transform:scaleX(0.888);">Cam...</div>
<div class="t" style="left:651px;top:762px;font-size:12.2px;color:#fff;transform:scaleX(0.888);">Cam...</div>
<div class="t" style="left:697.1px;top:762px;font-size:12.2px;color:#fff;transform:scaleX(0.888);">Cam...</div>
<div class="b" style="left:53px;top:810px;width:1162px;height:2px;background:repeating-linear-gradient(90deg,#3b3a39 0,#3b3a39 2px,transparent 2px,transparent 4px);"></div>
<svg class="b" style="left:808px;top:568px;" width="362" height="179" viewBox="808 568 362 179"><rect x="810.400" y="570.100" width="357" height="174.300" fill="none" stroke="#c4c4c4" stroke-width="1"/></svg>
<svg class="b" style="left:800px;top:540px" width="380" height="215" viewBox="800 540 380 215"><path d="M810.500 581v-10.500h11M1156.500 570.500h11v10.500M1167.500 733.500v11h-11M821.500 744.500h-11v-11" fill="none" stroke="#a6a6a6" stroke-width="3.600"/><path d="M981 570.500h15M981 744.500h15" stroke="#a6a6a6" stroke-width="4"/><path d="M811 650v15M1167 650v15" stroke="#a6a6a6" stroke-width="4"/><path d="M1073 546.200h18.500l-7.300 8.600v7.400h-3.900v-7.400z" fill="none" stroke="#605e5c" stroke-width="1.300" stroke-linejoin="round"/><path d="M1114 547h-5.500v15h16v-5.500M1108.500 555h8v7M1118 547h6.500v6.500M1124.500 547l-6.500 6.500" fill="none" stroke="#605e5c" stroke-width="1.300"/><circle cx="1143.600" cy="554" r="1.600" fill="#605e5c"/><circle cx="1151.300" cy="554" r="1.600" fill="#605e5c"/><circle cx="1159" cy="554" r="1.600" fill="#605e5c"/><rect x="814.200" y="618.3" width="305.500" height="18.200" fill="#ededed"/><rect x="814.200" y="654.8" width="305.500" height="18.200" fill="#ededed"/><rect x="814.200" y="691.3" width="305.500" height="18.200" fill="#ededed"/><path d="M814.200 599.300H1119.500" stroke="#5aaeff" stroke-width="1"/><path d="M948.600 599.300V728" stroke="#2b8ee8" stroke-width="1"/></svg>
<div class="t" style="left:819.3px;top:578px;font-size:12.2px;transform:scaleX(0.973);">Objective</div>
<div class="t" style="left:954.2px;top:578px;font-size:12.2px;transform:scaleX(0.856);">ACTIVE</div>
<div class="t" style="left:1005.8px;top:578px;font-size:12.2px;transform:scaleX(0.89);">ARCHIVED</div>
<div class="t" style="left:1072.5px;top:578px;font-size:12.2px;font-weight:700;transform:scaleX(0.967);">Total</div>
<div class="t" style="left:819.3px;top:604px;font-size:12.2px;transform:scaleX(0.891);">CONVERSIONS</div>
<div class="t" style="left:963.9px;top:604px;font-size:12.2px;transform:scaleX(0.943);">20212</div>
<div class="t" style="left:1023.9px;top:604px;font-size:12.2px;transform:scaleX(0.946);">103595</div>
<div class="t" style="left:1073.5px;top:604px;font-size:12.2px;font-weight:700;transform:scaleX(1.007);">123807</div>
<div class="t" style="left:819.3px;top:622px;font-size:12.2px;transform:scaleX(0.875);">MOBILE_APP_INSTALLS</div>
<div class="t" style="left:963.9px;top:622px;font-size:12.2px;transform:scaleX(0.943);">42598</div>
<div class="t" style="left:1030.4px;top:622px;font-size:12.2px;transform:scaleX(0.943);">38932</div>
<div class="t" style="left:1080px;top:622px;font-size:12.2px;font-weight:700;transform:scaleX(1.017);">81530</div>
<div class="t" style="left:819.3px;top:641px;font-size:12.2px;transform:scaleX(0.82);">PAGE_LIKES</div>
<div class="t" style="left:963.9px;top:641px;font-size:12.2px;transform:scaleX(0.969);">11680</div>
<div class="t" style="left:1030.4px;top:641px;font-size:12.2px;transform:scaleX(0.943);">84976</div>
<div class="t" style="left:1080px;top:641px;font-size:12.2px;font-weight:700;transform:scaleX(1.017);">96656</div>
<div class="t" style="left:819.3px;top:659px;font-size:12.2px;transform:scaleX(0.877);">POST_ENGAGEMENT</div>
<div class="t" style="left:963.9px;top:659px;font-size:12.2px;transform:scaleX(0.943);">43536</div>
<div class="t" style="left:1030.4px;top:659px;font-size:12.2px;transform:scaleX(0.943);">19225</div>
<div class="t" style="left:1080px;top:659px;font-size:12.2px;font-weight:700;transform:scaleX(1.017);">62761</div>
<div class="t" style="left:819.3px;top:677px;font-size:12.2px;transform:scaleX(0.878);">VIDEO_VIEWS</div>
<div class="t" style="left:963.9px;top:677px;font-size:12.2px;transform:scaleX(0.943);">18924</div>
<div class="t" style="left:1030.4px;top:677px;font-size:12.2px;transform:scaleX(0.943);">14288</div>
<div class="t" style="left:1080px;top:677px;font-size:12.2px;font-weight:700;transform:scaleX(1.017);">33212</div>
<div class="t" style="left:819.3px;top:695px;font-size:12.2px;transform:scaleX(0.837);">WEBSITE_CLICKS</div>
<div class="t" style="left:963.9px;top:695px;font-size:12.2px;transform:scaleX(0.943);">17138</div>
<div class="t" style="left:1030.4px;top:695px;font-size:12.2px;transform:scaleX(0.943);">37850</div>
<div class="t" style="left:1080px;top:695px;font-size:12.2px;font-weight:700;transform:scaleX(1.017);">54988</div>
<div class="t" style="left:819.3px;top:713px;font-size:12.2px;font-weight:700;transform:scaleX(0.967);">Total</div>
<div class="t" style="left:954.9px;top:713px;font-size:12.2px;font-weight:700;transform:scaleX(1.007);">154088</div>
<div class="t" style="left:1021.4px;top:713px;font-size:12.2px;font-weight:700;transform:scaleX(1.007);">298866</div>
<div class="t" style="left:1073.5px;top:713px;font-size:12.2px;font-weight:700;transform:scaleX(1.007);">452954</div>
<!-- panes -->
<div class="b" style="left:1217px;top:154px;width:1px;height:746px;background:#b3b0ad;"></div>
<div class="b" style="left:1218px;top:154px;width:250px;height:746px;background:#fff;"></div>
<div class="b" style="left:1218px;top:900px;width:250px;height:45px;background:#f3f2f1;"></div>
<div class="t" style="left:1263.9px;top:169px;font-size:20px;-webkit-text-stroke:0.5px #252423;transform:scaleX(0.975);">Filters</div>
<div class="b" style="left:1228px;top:211px;width:225px;height:42px;background:#fff;border:1px solid #c8c6c4;box-sizing:border-box;border-radius:2px;"></div>
<div class="t" style="left:1273px;top:225px;font-size:16.3px;transform:scaleX(0.939);">Search</div>
<div class="b" style="left:1218px;top:258px;width:250px;height:1px;background:#d2d0ce;"></div>
<svg class="b" style="left:1460px;top:268px;" width="9" height="568" viewBox="1460 268 9 568"><rect x="1461" y="269" width="6.800" height="566" rx="3.400" fill="#8a8886"/></svg>
<div class="t" style="left:1228px;top:282px;font-size:15.2px;transform:scaleX(0.963);">Filters on this visual</div>
<div class="b" style="left:1228px;top:311px;width:229.7px;height:77px;background:#fff;border:1px solid #c8c6c4;box-sizing:border-box;border-radius:2px;"></div>
<div class="t" style="left:1239px;top:325px;font-size:15.2px;transform:scaleX(0.979);">Objective</div>
<div class="t" style="left:1239px;top:358px;font-size:15.2px;transform:scaleX(0.947);">is (All)</div>
<div class="b" style="left:1228px;top:396px;width:229.7px;height:77px;background:#fff;border:1px solid #c8c6c4;box-sizing:border-box;border-radius:2px;"></div>
<div class="t" style="left:1239px;top:410px;font-size:15.2px;transform:scaleX(0.928);">Status</div>
<div class="t" style="left:1239px;top:442px;font-size:15.2px;transform:scaleX(0.947);">is (All)</div>
<div class="b" style="left:1228px;top:480px;width:229.7px;height:77px;background:#fff;border:1px solid #c8c6c4;box-sizing:border-box;border-radius:2px;"></div>
<div class="t" style="left:1239px;top:494px;font-size:15.2px;transform:scaleX(0.979);">Sum of DailyBudget</div>
<div class="t" style="left:1239px;top:527px;font-size:15.2px;transform:scaleX(0.947);">is (All)</div>
<div class="b" style="left:1228px;top:565.2px;width:229.7px;height:56.5px;background:#fff;border:1px solid #c8c6c4;box-sizing:border-box;border-radius:2px;"></div>
<div class="t" style="left:1276.5px;top:586px;font-size:15.2px;transform:scaleX(0.984);">Add data fields here</div>
<div class="t" style="left:1228px;top:657px;font-size:15.2px;transform:scaleX(0.973);">Filters on this page</div>
<div class="b" style="left:1228px;top:686px;width:229.7px;height:76.6px;background:#f3f2f1;border:1px solid #c8c6c4;box-sizing:border-box;border-radius:2px;"></div>
<div class="t" style="left:1239px;top:700px;font-size:15.2px;font-weight:700;transform:scaleX(0.936);">Status</div>
<div class="t" style="left:1239px;top:733px;font-size:15.2px;transform:scaleX(0.896);">is ACTIVE or ARCHI…</div>
<div class="b" style="left:1228px;top:771.3px;width:229.7px;height:56.5px;background:#fff;border:1px solid #c8c6c4;box-sizing:border-box;border-radius:2px;"></div>
<div class="t" style="left:1276.5px;top:792px;font-size:15.2px;transform:scaleX(0.984);">Add data fields here</div>
<div class="t" style="left:1228px;top:863px;font-size:15.2px;transform:scaleX(0.964);">Filters on all pages</div>
<div class="b" style="left:1228px;top:892.6px;width:229.7px;height:12px;background:#fff;border:1px solid #c8c6c4;box-sizing:border-box;border-radius:2px;clip-path:inset(0 0 4.600px 0);"></div>
<svg class="b" style="left:1218px;top:156px" width="250" height="744" viewBox="1218 156 250 744"><path d="M1234 170.300h18.300l-7.200 8.800v6.800h-3.900v-6.800z" fill="none" stroke="#252423" stroke-width="1.700" stroke-linejoin="miter"/><path d="M1403.500 180a7.500 7.500 0 0 1 14 0" fill="none" stroke="#252423" stroke-width="1.300"/><circle cx="1410.500" cy="179" r="2.300" fill="none" stroke="#252423" stroke-width="1.300"/><path d="M1441 171.5l6.500 6.500-6.500 6.500M1447.5 171.5l6.500 6.500-6.500 6.500" fill="none" stroke="#252423" stroke-width="1.400"/><circle cx="1254" cy="229.500" r="5.700" fill="none" stroke="#605e5c" stroke-width="1.300"/><path d="M1250 233.500l-7.500 7.500" stroke="#605e5c" stroke-width="1.300"/><circle cx="1439.7" cy="294" r="1" fill="#605e5c"/><circle cx="1445.3" cy="294" r="1" fill="#605e5c"/><circle cx="1450.9" cy="294" r="1" fill="#605e5c"/><circle cx="1439.7" cy="669" r="1" fill="#605e5c"/><circle cx="1445.3" cy="669" r="1" fill="#605e5c"/><circle cx="1450.9" cy="669" r="1" fill="#605e5c"/><circle cx="1439.7" cy="875" r="1" fill="#605e5c"/><circle cx="1445.3" cy="875" r="1" fill="#605e5c"/><circle cx="1450.9" cy="875" r="1" fill="#605e5c"/></svg>
<div class="b" style="left:1468px;top:154px;width:1px;height:791px;background:#e1dfdd;"></div>
<div class="b" style="left:1469px;top:154px;width:225px;height:791px;background:#f3f2f1;"></div>
<div class="b" style="left:1694px;top:154px;width:1px;height:791px;background:#e1dfdd;"></div>
<div class="t" style="left:1479.4px;top:169px;font-size:20px;-webkit-text-stroke:0.5px #252423;transform:scaleX(1.009);">Visualizations</div>
<div class="t" style="left:1479.4px;top:204px;font-size:15px;-webkit-text-stroke:0.4px #252423;transform:scaleX(1.01);">Build visual</div>
<div class="b" style="left:1479px;top:226px;width:40px;height:40px;background:#d2d0ce;border-radius:3px;"></div>
<div class="b" style="left:1469px;top:575.3px;width:225px;height:1px;background:#e1dfdd;"></div>
<div class="t" style="left:1484.2px;top:589px;font-size:15.2px;transform:scaleX(0.895);">Rows</div>
<div class="b" style="left:1474px;top:613px;width:213px;height:45px;background:#fff;border:1px dashed #c8c6c4;box-sizing:border-box;border-radius:2px;"></div>
<div class="b" style="left:1478px;top:618px;width:205px;height:28px;background:#edebe9;border:1px solid #c8c6c4;box-sizing:border-box;border-radius:3px;"></div>
<div class="t" style="left:1483.8px;top:625px;font-size:15.2px;transform:scaleX(0.963);">Objective</div>
<svg class="b" style="left:1643px;top:623px;" width="40" height="18" viewBox="0 0 40 18"><path d="M2.500 5.500l6.500 6.500 6.500-6.500" fill="none" stroke="#252423" stroke-width="1.200"/><path d="M24 3.500l10 10M34 3.500l-10 10" fill="none" stroke="#252423" stroke-width="1.200"/></svg>
<div class="t" style="left:1484.2px;top:673px;font-size:15.2px;transform:scaleX(0.967);">Columns</div>
<div class="b" style="left:1474px;top:697px;width:213px;height:45px;background:#fff;border:1px dashed #c8c6c4;box-sizing:border-box;border-radius:2px;"></div>
<div class="b" style="left:1478px;top:702px;width:205px;height:28px;background:#edebe9;border:1px solid #c8c6c4;box-sizing:border-box;border-radius:3px;"></div>
<div class="t" style="left:1483.8px;top:709px;font-size:15.2px;transform:scaleX(0.928);">Status</div>
<svg class="b" style="left:1643px;top:707px;" width="40" height="18" viewBox="0 0 40 18"><path d="M2.500 5.500l6.500 6.500 6.500-6.500" fill="none" stroke="#252423" stroke-width="1.200"/><path d="M24 3.500l10 10M34 3.500l-10 10" fill="none" stroke="#252423" stroke-width="1.200"/></svg>
<div class="t" style="left:1484.2px;top:757px;font-size:15.2px;transform:scaleX(0.926);">Values</div>
<div class="b" style="left:1474px;top:782px;width:213px;height:45px;background:#fff;border:1px dashed #c8c6c4;box-sizing:border-box;border-radius:2px;"></div>
<div class="b" style="left:1478px;top:787px;width:205px;height:28px;background:#edebe9;border:1px solid #c8c6c4;box-sizing:border-box;border-radius:3px;"></div>
<div class="t" style="left:1483.8px;top:793px;font-size:15.2px;transform:scaleX(0.971);">Sum of DailyBudget</div>
<svg class="b" style="left:1643px;top:792px;" width="40" height="18" viewBox="0 0 40 18"><path d="M2.500 5.500l6.500 6.500 6.500-6.500" fill="none" stroke="#252423" stroke-width="1.200"/><path d="M24 3.500l10 10M34 3.500l-10 10" fill="none" stroke="#252423" stroke-width="1.200"/></svg>
<div class="t" style="left:1484.2px;top:842px;font-size:15.2px;color:#3b3a39;-webkit-text-stroke:0.4px #3b3a39;transform:scaleX(1.062);">Drill through</div>
<div class="t" style="left:1484.2px;top:874px;font-size:15.2px;transform:scaleX(0.983);">Cross-report</div>
<div class="t" style="left:1484.2px;top:907px;font-size:15.2px;transform:scaleX(0.969);">Keep all filters</div>
<div class="b" style="left:1627px;top:872px;width:40px;height:20px;background:#fff;border:1px solid #605e5c;box-sizing:border-box;border-radius:10px;"></div>
<svg class="b" style="left:1630px;top:875px;" width="14" height="14" viewBox="0 0 14 14"><circle cx="7.900" cy="7.100" r="5" fill="#605e5c"/></svg>
<div class="t" style="left:1645.3px;top:877px;font-size:11.5px;color:#605e5c;transform:scaleX(1.025);">Off</div>
<div class="b" style="left:1627px;top:906px;width:40px;height:20px;background:#117865;border-radius:10px;"></div>
<svg class="b" style="left:1649px;top:909px;" width="14" height="14" viewBox="0 0 14 14"><circle cx="7.200" cy="7.200" r="5" fill="#fff"/></svg>
<div class="t" style="left:1632.8px;top:911px;font-size:11.5px;color:#fff;transform:scaleX(0.926);">On</div>
<svg class="b" style="left:1686px;top:577px;" width="9" height="321" viewBox="1686 577 9 321"><rect x="1687.300" y="578.300" width="6.600" height="318.600" rx="3.300" fill="#8a8886"/></svg>
<svg class="b" style="left:1469px;top:156px" width="226" height="420" viewBox="1469 156 226 420"><path d="M1669 171.5l6.500 6.500-6.500 6.500M1675.5 171.5l6.500 6.500-6.500 6.500" fill="none" stroke="#252423" stroke-width="1.400"/><path d="M1484.400 231.500h23.500" stroke="#3b3a39" stroke-width="1.200"/><rect x="1484.900" y="237.700" width="28.400" height="9" fill="#117865" stroke="#0b3d33" stroke-width="1.100" stroke-dasharray="2.200 1.400"/><rect x="1484.900" y="251.300" width="28.400" height="9" fill="#117865" stroke="#0b3d33" stroke-width="1.100" stroke-dasharray="2.200 1.400"/><path d="M1571.500 242v13h7M1575.500 255v-20.500h6.500v11M1582 241h5.500v3" fill="none" stroke="#252423" stroke-width="1.300"/><path d="M1596 236.500l-9.500 13.500c-3-1-5.500 1-6 4-0.500 2.500-1.500 3.500-3 4 4 1.500 9 0.500 10.500-3.500 0.700-2 0-3.500-1-4.500l10.500-12.500z" fill="#f3f2f1" stroke="#252423" stroke-width="1.300" stroke-linejoin="round"/><circle cx="1662" cy="244.500" r="11.500" fill="none" stroke="#252423" stroke-width="1.300"/><path d="M1670.500 253l8 8" stroke="#252423" stroke-width="2.600"/><path d="M1652.500 246l5.500-4.500 4 3 8-6" fill="none" stroke="#252423" stroke-width="1.300"/><path d="M1656 248v6.500M1660 249.500v6M1664 248v7.500M1668 246v7" stroke="#252423" stroke-width="1.300"/><path d="M1469 281.500H1489.500L1498.800 272.700L1508.500 281.500H1694" fill="none" stroke="#a19f9d" stroke-width="1"/><circle cx="1486.3" cy="550" r="1.2" fill="#252423"/><circle cx="1494" cy="550" r="1.2" fill="#252423"/><circle cx="1501.7" cy="550" r="1.2" fill="#252423"/><g transform="translate(1482.1 295.5)"><path d="M1.500 1v22" fill="none" stroke="#3b3a39" stroke-width="1.600"/><rect x="2.5" y="3.5" width="13" height="5.5" fill="#83beec" stroke="#2b88d8" stroke-width="1.500"/><rect x="2.5" y="13" width="19" height="5.5" fill="#c8c8c8" stroke="#a6a6a6" stroke-width="1.500"/><path d="M1 22.500h22" fill="none" stroke="#3b3a39" stroke-width="1.600"/></g><g transform="translate(1517.03 295.5)"><path d="M1.500 1.500v21h21" fill="none" stroke="#3b3a39" stroke-width="1.600"/><rect x="4.5" y="8" width="5" height="14" fill="#83beec" stroke="#2b88d8" stroke-width="1.500"/><rect x="9.5" y="3" width="4.5" height="19" fill="none" stroke="#3b3a39" stroke-width="1.500"/><rect x="16" y="5" width="4.5" height="17" fill="#c8c8c8" stroke="#a6a6a6" stroke-width="1.500"/></g><g transform="translate(1551.96 295.5)"><path d="M1.500 1v22" fill="none" stroke="#3b3a39" stroke-width="1.600"/><rect x="2.5" y="2.5" width="19" height="5" fill="#83beec" stroke="#2b88d8" stroke-width="1.500"/><rect x="2.5" y="9.5" width="12" height="5" fill="#c8c8c8" stroke="#a6a6a6" stroke-width="1.500"/><rect x="2.5" y="16.5" width="16" height="5" fill="none" stroke="#3b3a39" stroke-width="1.500"/></g><g transform="translate(1586.89 295.5)"><path d="M1.500 1.500v21h21" fill="none" stroke="#3b3a39" stroke-width="1.600"/><rect x="3" y="3" width="5" height="19" fill="#83beec" stroke="#2b88d8" stroke-width="1.500"/><rect x="9.5" y="9" width="5" height="13" fill="#c8c8c8" stroke="#a6a6a6" stroke-width="1.500"/><rect x="16" y="6" width="5" height="16" fill="none" stroke="#3b3a39" stroke-width="1.500"/></g><g transform="translate(1621.82 295.5)"><path d="M1.500 1v22" fill="none" stroke="#3b3a39" stroke-width="1.600"/><rect x="2.5" y="3.5" width="19.5" height="5.5" fill="#83beec" stroke="#2b88d8" stroke-width="1.500"/><rect x="2.5" y="13" width="19.5" height="5.5" fill="#c8c8c8" stroke="#a6a6a6" stroke-width="1.500"/><path d="M1 22.500h22" fill="none" stroke="#3b3a39" stroke-width="1.600"/></g><g transform="translate(1656.75 295.5)"><path d="M1.500 1.500v21h21" fill="none" stroke="#3b3a39" stroke-width="1.600"/><rect x="4" y="3" width="5.5" height="19" fill="#83beec" stroke="#2b88d8" stroke-width="1.500"/><rect x="11" y="3" width="5" height="19" fill="#c8c8c8" stroke="#a6a6a6" stroke-width="1.500"/><rect x="17.5" y="3" width="4.5" height="19" fill="none" stroke="#3b3a39" stroke-width="1.500"/></g><g transform="translate(1482.1 330.45)"><path d="M1.500 1.500v21h21" fill="none" stroke="#3b3a39" stroke-width="1.600"/><path d="M2 17l6-7 4 4 5-6 5 5" fill="none" stroke="#3b3a39" stroke-width="1.600"/><path d="M2 20l6-5 5 2 9-8" fill="none" stroke="#2b88d8" stroke-width="1.600"/></g><g transform="translate(1517.03 330.45)"><path d="M1.500 22.500l7-13 5 7 4-9 5 15z" fill="#83beec" stroke="#2b88d8" stroke-width="1.600" stroke-linejoin="round"/><path d="M1.500 22.500l7-20 6 12 3-5 5 13" fill="none" stroke="#3b3a39" stroke-width="1.600" stroke-linejoin="round"/></g><g transform="translate(1551.96 330.45)"><path d="M1.500 1.500v21h21" fill="none" stroke="#3b3a39" stroke-width="1.600"/><path d="M2 7l6 6 6-6 8 8v7h-20z" fill="#83beec" stroke="#2b88d8" stroke-width="1.600"/></g><g transform="translate(1586.89 330.45)"><rect x="1.500" y="3" width="21" height="19" fill="none" stroke="#3b3a39" stroke-width="1.600"/><path d="M2 9l7 8 6-6 7 5v6h-20z" fill="#83beec" stroke="#2b88d8" stroke-width="1.500"/></g><g transform="translate(1621.82 330.45)"><path d="M1.500 1.500v21h21" fill="none" stroke="#3b3a39" stroke-width="1.600"/><rect x="4" y="9" width="4.5" height="13" fill="#83beec" stroke="#2b88d8" stroke-width="1.500"/><rect x="10" y="5" width="4.5" height="17" fill="#c8c8c8" stroke="#a6a6a6" stroke-width="1.500"/><rect x="16" y="4" width="4.5" height="18" fill="#c8c8c8" stroke="#a6a6a6" stroke-width="1.500"/><path d="M2 14l7 6 6-9 7 5" fill="none" stroke="#3b3a39" stroke-width="1.600"/></g><g transform="translate(1656.75 330.45)"><path d="M1.500 1.500v21h21" fill="none" stroke="#3b3a39" stroke-width="1.600"/><rect x="4" y="12" width="5" height="10" fill="#83beec" stroke="#2b88d8" stroke-width="1.500"/><rect x="9" y="5" width="5" height="17" fill="#83beec" stroke="#2b88d8" stroke-width="1.500"/><rect x="16" y="9" width="4.5" height="13" fill="#c8c8c8" stroke="#a6a6a6" stroke-width="1.500"/><path d="M2 20l8-7 4 4 8-9" fill="none" stroke="#3b3a39" stroke-width="1.600"/></g><g transform="translate(1482.1 365.4)"><path d="M1.500 1.500v21h21" fill="none" stroke="#3b3a39" stroke-width="1.600"/><path d="M2 5c5 0 5 9 10 9s5-9 10-9v8c-5 0-5 6-10 6s-5-6-10-6z" fill="#8a8886" stroke="#3b3a39" stroke-width="1"/><path d="M2 13c5 0 5 6 10 6s5-6 10-6v5c-5 0-5 3-10 3s-5-3-10-3z" fill="#e88a2a" stroke="#c8690a" stroke-width="1"/><path d="M2 18c5 0 5 3 10 3s5-3 10-3v4h-20z" fill="#83beec"/></g><g transform="translate(1517.03 365.4)"><path d="M1.500 1.500v21h21" fill="none" stroke="#3b3a39" stroke-width="1.600"/><rect x="4" y="6" width="4.5" height="16" fill="none" stroke="#3b3a39" stroke-width="1.500"/><rect x="8.5" y="10" width="4.5" height="12" fill="none" stroke="#3b3a39" stroke-width="1.500"/><rect x="13" y="3" width="4.5" height="19" fill="#83beec" stroke="#2b88d8" stroke-width="1.500"/><rect x="17.5" y="3" width="4" height="19" fill="none" stroke="#3b3a39" stroke-width="1.500"/></g><g transform="translate(1551.96 365.4)"><rect x="1.5" y="3" width="21" height="5.5" fill="#83beec" stroke="#2b88d8" stroke-width="1.500"/><rect x="4.5" y="10" width="15" height="5.5" fill="#83beec" stroke="#2b88d8" stroke-width="1.500"/><rect x="8" y="17" width="8" height="5" fill="#83beec" stroke="#2b88d8" stroke-width="1.500"/></g><g transform="translate(1586.89 365.4)"><path d="M1.500 1.500v21h21" fill="none" stroke="#3b3a39" stroke-width="1.600"/><rect x="5" y="14" width="2.6" height="2.6" fill="#3b3a39"/><rect x="9" y="9" width="2.6" height="2.6" fill="#2b88d8"/><rect x="13" y="16" width="2.6" height="2.6" fill="#2b88d8"/><rect x="16" y="5" width="2.6" height="2.6" fill="#3b3a39"/><rect x="19" y="12" width="2.6" height="2.6" fill="#83beec"/><rect x="8" y="18" width="2.6" height="2.6" fill="#83beec"/><rect x="14" y="10" width="2.6" height="2.6" fill="#3b3a39"/><rect x="19" y="4" width="2.6" height="2.6" fill="#3b3a39"/></g><g transform="translate(1621.82 365.4)"><circle cx="12" cy="12" r="10.500" fill="#fafafa" stroke="#3b3a39" stroke-width="1.600"/><path d="M12 12V1.500A10.500 10.500 0 0 1 19.800 19z" fill="#83beec" stroke="#2b88d8" stroke-width="1.500" stroke-linejoin="round"/></g><g transform="translate(1656.75 365.4)"><circle cx="12" cy="12" r="8" fill="none" stroke="#83beec" stroke-width="5.500"/><circle cx="12" cy="12" r="10.800" fill="none" stroke="#2b88d8" stroke-width="1.500"/><circle cx="12" cy="12" r="5.200" fill="none" stroke="#2b88d8" stroke-width="1.500"/></g><g transform="translate(1482.1 400.35)"><rect x="1.5" y="1.5" width="9.5" height="21" fill="#83beec" stroke="#2b88d8" stroke-width="1.500"/><rect x="11" y="1.5" width="11.5" height="7" fill="#83beec" stroke="#2b88d8" stroke-width="1.500"/><rect x="11" y="8.5" width="6" height="14" fill="none" stroke="#3b3a39" stroke-width="1.500"/><rect x="17" y="8.5" width="5.5" height="7" fill="none" stroke="#3b3a39" stroke-width="1.500"/><rect x="17" y="15.5" width="5.5" height="7" fill="none" stroke="#3b3a39" stroke-width="1.500"/></g><g transform="translate(1517.03 400.35)"><circle cx="12" cy="10.500" r="8.500" fill="#f3f2f1" stroke="#3b3a39" stroke-width="1.700"/><path d="M7 6c2-2 5-1 5 1s-3 2-2 4 3 1 4 3-1 4-3 4c-3 0-5-3-5-6 0-2 0-4 1-6z" fill="#2f9e44"/><path d="M15 5c2 1 3 3 3 5-1 0-3-1-3-2z" fill="#2f9e44"/><path d="M8 22.500h8M12 19v3.500" stroke="#3b3a39" stroke-width="1.500"/></g><g transform="translate(1551.96 400.35)"><path d="M2 5l5-2 5 2 4-2 6 1v9l-3 4-4 1-3 3-4-1-3-4-3-2z" fill="#83beec" stroke="#2b88d8" stroke-width="1.500" stroke-linejoin="round"/><path d="M2 9l5 1 1 5 5 1 1 5-4-1-3-4-3-2z" fill="#8a8886"/><path d="M12 5l4-2 6 1v9l-3 4-3-5z" fill="#2b88d8"/></g><g transform="translate(1586.89 400.35)"><path d="M14 1.500l6.500 21-7.500-6.500-10.500 5z" fill="#2b88d8" stroke="#2b88d8" stroke-width="1" stroke-linejoin="round"/><path d="M14 1.500l-1 14.500-10.500 5z" fill="#83beec"/></g><g transform="translate(1621.82 400.35)"><path d="M2 18a10 10 0 0 1 20 0" fill="none" stroke="#3b3a39" stroke-width="1.600"/><path d="M5.500 18a6.500 6.500 0 0 1 9-6" fill="none" stroke="#2b88d8" stroke-width="3.500"/><path d="M11 18l6-6" stroke="#3b3a39" stroke-width="1.800"/></g><g transform="translate(1656.75 400.35)"><rect x="1.5" y="5" width="21" height="14" fill="#fff" stroke="#3b3a39" stroke-width="1.500"/><text x="12" y="16" font-family="Liberation Sans,sans-serif" font-size="10" fill="#2b88d8" text-anchor="middle">123</text></g><g transform="translate(1482.1 435.3)"><rect x="1.5" y="3" width="21" height="18" fill="#fff" stroke="#3b3a39" stroke-width="1.500"/><path d="M5 8h11M5 12h14M5 16h9" stroke="#2b88d8" stroke-width="1.600"/></g><g transform="translate(1517.03 435.3)"><rect x="1.5" y="4" width="21" height="16" fill="#fff" stroke="#3b3a39" stroke-width="1.500"/><path d="M4.500 14l4-6 4 6z" fill="#2f9e44"/><path d="M12.500 8h8l-4 6z" fill="#e03c31"/><path d="M4 17h16" stroke="#a6a6a6" stroke-width="1"/></g><g transform="translate(1551.96 435.3)"><rect x="1.5" y="3" width="19" height="15" fill="#fff" stroke="#3b3a39" stroke-width="1.500"/><path d="M1.500 7h19" stroke="#3b3a39" stroke-width="1.500"/><rect x="4" y="10" width="3" height="2.5" fill="none" stroke="#3b3a39" stroke-width="1.500"/><rect x="4" y="14" width="3" height="2.5" fill="none" stroke="#3b3a39" stroke-width="1.500"/><path d="M11 12h12l-4.500 5v5.500l-3-2v-3.500z" fill="#f3f2f1" stroke="#3b3a39" stroke-width="1.600" stroke-linejoin="round"/></g><g transform="translate(1586.89 435.3)"><rect x="1.5" y="3" width="21" height="18" fill="#fff" stroke="#3b3a39" stroke-width="1.500"/><path d="M1.500 8h21M1.500 12.500h21M1.500 17h21M8.500 3v18M15.500 3v18" stroke="#3b3a39" stroke-width="1.100"/></g><rect x="1619.12" y="432.6" width="29.400" height="29.400" fill="#fafafa" stroke="#252423" stroke-width="1"/><g transform="translate(1621.82 435.3)"><rect x="1.5" y="2.5" width="21" height="19" fill="#fff"/><rect x="1.5" y="2.5" width="21" height="4.5" fill="#c8c8c8"/><rect x="15.5" y="7" width="7" height="14.5" fill="#83beec"/><rect x="1.5" y="12" width="21" height="9.5" fill="#5aa7e6"/><path d="M1.500 7h21M1.500 12h21M1.500 16.800h21" stroke="#fff" stroke-width="1"/><path d="M8.500 7v14.500M15.500 7v14.500" stroke="#fff" stroke-width="1"/><rect x="1.5" y="2.5" width="21" height="19" fill="none" stroke="#3b3a39" stroke-width="1.500"/></g><g transform="translate(1656.75 435.3)"><text x="12" y="20" font-family="Liberation Sans,sans-serif" font-size="20" font-weight="700" fill="#2b88d8" text-anchor="middle">R</text></g><g transform="translate(1482.1 470.25)"><text x="12" y="18.500" font-family="Liberation Sans,sans-serif" font-size="20" font-weight="700" fill="#2b88d8" text-anchor="middle" letter-spacing="-1">Py</text></g><g transform="translate(1517.03 470.25)"><path d="M1.500 1.500v21h21" fill="none" stroke="#3b3a39" stroke-width="1.600"/><path d="M2 6h14M2 12h8M2 18h6" stroke="#3b3a39" stroke-width="1.600"/><circle cx="18.500" cy="6" r="2.300" fill="#f3f2f1" stroke="#2b88d8" stroke-width="1.600"/><circle cx="12" cy="12" r="2" fill="#3b3a39"/><circle cx="10" cy="18" r="2" fill="#3b3a39"/></g><g transform="translate(1551.96 470.25)"><rect x="1.5" y="9" width="6.5" height="6" fill="#83beec" stroke="#2b88d8" stroke-width="1.500"/><rect x="14.5" y="2.5" width="7.5" height="5" fill="#83beec" stroke="#2b88d8" stroke-width="1.500"/><rect x="14.5" y="9.5" width="7.5" height="5" fill="#83beec" stroke="#2b88d8" stroke-width="1.500"/><rect x="14.5" y="16.5" width="7.5" height="5" fill="#83beec" stroke="#2b88d8" stroke-width="1.500"/><path d="M8 12h6.500M11 5v14M11 5h3.500M11 19h3.500" fill="none" stroke="#3b3a39" stroke-width="1.600"/></g><g transform="translate(1586.89 470.25)"><path d="M1.500 3.500h21v14h-12l-5 5v-5h-4z" fill="#fff" stroke="#2b88d8" stroke-width="1.600" stroke-linejoin="round"/></g><g transform="translate(1621.82 470.25)"><path d="M4 2h10l6 6v14h-16z" fill="#fff" stroke="#3b3a39" stroke-width="1.600"/><path d="M14 2v6h6" fill="none" stroke="#3b3a39" stroke-width="1.600"/><path d="M7.500 12h9M7.500 15h9M7.500 18h6" stroke="#2b88d8" stroke-width="1.600"/><circle cx="5" cy="9" r="2" fill="#f3f2f1" stroke="#2b88d8" stroke-width="1.500"/></g><g transform="translate(1656.75 470.25)"><path d="M6.500 2.500h11v8a5.500 5.500 0 0 1-11 0z" fill="#fff" stroke="#3b3a39" stroke-width="1.500"/><path d="M6.500 5h-4.500c0 4 2 6 5 6.500M17.500 5h4.500c0 4-2 6-5 6.500M12 16v4M7 22h10M8.500 20h7" fill="none" stroke="#3b3a39" stroke-width="1.500"/></g><g transform="translate(1482.1 505.2)"><path d="M3.500 1.500h12l5.500 5.500v15.500h-17.500z" fill="#fff" stroke="#3b3a39" stroke-width="1.600"/><rect x="7" y="15" width="2.5" height="5" fill="#3b3a39"/><rect x="11" y="11" width="2.5" height="9" fill="#3b3a39"/><rect x="15" y="13" width="2.5" height="7" fill="#3b3a39"/></g><g transform="translate(1517.03 505.2)"><rect x="5" y="7" width="17" height="13" fill="#fff" stroke="#3b3a39" stroke-width="1.500"/><text x="13.800" y="17.500" font-family="Liberation Sans,sans-serif" font-size="9.500" fill="#2b88d8" text-anchor="middle">123</text><path d="M5 1h7l-3 6h4l-9 10 2.500-7.500h-4.500z" fill="#f7a941" stroke="#e07a10" stroke-width="1" stroke-linejoin="round"/></g><g transform="translate(1551.96 505.2)"><rect x="8" y="4" width="13" height="9" fill="#c8c8c8" stroke="#a6a6a6" stroke-width="1.500"/><path d="M8 13h14l-5 5.500v5l-4-2.500v-2.500z" fill="#f3f2f1" stroke="#3b3a39" stroke-width="1.600" stroke-linejoin="round"/><path d="M5 1h7l-3 6h4l-9 10 2.500-7.500h-4.500z" fill="#f7a941" stroke="#e07a10" stroke-width="1" stroke-linejoin="round"/></g><g transform="translate(1586.89 505.2)"><rect x="1.5" y="2" width="21" height="20" fill="#83beec" stroke="#2b88d8" stroke-width="1.500"/><path d="M1.500 14c5-6 9 4 13-2s5-6 8-6v-4h-21z" fill="#fff"/><path d="M3 2h6v5l-3 4-3-4z" fill="#e07a10"/><circle cx="19" cy="18" r="3" fill="#e07a10"/><path d="M6 19l5-5 5 2 5-6" fill="none" stroke="#3b3a39" stroke-width="1.500"/><rect x="1.5" y="2" width="21" height="20" fill="none" stroke="#2b88d8" stroke-width="1.500"/></g><g transform="translate(1621.82 505.2)"><path d="M12 2l10 10-10 10-10-10z" fill="none" stroke="#9b30b8" stroke-width="1.600" stroke-linejoin="round"/><path d="M7 7l10 10M17 7l-10 10" stroke="#9b30b8" stroke-width="1.600"/></g><g transform="translate(1656.75 505.2)"><path d="M2 4h10l8 8-8 8h-10l8-8z" fill="none" stroke="#2b88d8" stroke-width="1.500" stroke-linejoin="round"/><path d="M12 4l10 8-10 8" fill="none" stroke="#2b88d8" stroke-width="1.500" stroke-linejoin="round"/></g></svg>
<div class="b" style="left:1695px;top:154px;width:223px;height:791px;background:#f3f2f1;"></div>
<div class="t" style="left:1705.8px;top:169px;font-size:20px;-webkit-text-stroke:0.5px #252423;transform:scaleX(0.963);">Data</div>
<div class="b" style="left:1700.5px;top:211px;width:214.5px;height:30px;background:#fff;border:1px solid #d2d0ce;border-bottom:1px solid #8a8886;box-sizing:border-box;border-radius:4px;"></div>
<div class="t" style="left:1742.9px;top:220px;font-size:17.6px;color:#605e5c;transform:scaleX(0.909);">Search</div>
<div class="t" style="left:1754px;top:260px;font-size:15.4px;transform:scaleX(0.937);">Campaigns</div>
<div class="t" style="left:1797.9px;top:290px;font-size:15.4px;transform:scaleX(0.955);">BidStrategy</div>
<div class="t" style="left:1797.9px;top:320px;font-size:15.4px;transform:scaleX(0.92);">BudgetRemaini…</div>
<div class="t" style="left:1797.9px;top:350px;font-size:15.4px;transform:scaleX(0.951);">BuyingType</div>
<div class="t" style="left:1797.9px;top:380px;font-size:15.4px;transform:scaleX(0.962);">ConfiguredStatus</div>
<div class="t" style="left:1797.9px;top:410px;font-size:15.4px;transform:scaleX(0.95);">CreatedTime</div>
<div class="t" style="left:1797.9px;top:440px;font-size:15.4px;transform:scaleX(0.969);">DailyBudget</div>
<div class="t" style="left:1797.9px;top:470px;font-size:15.4px;transform:scaleX(0.932);">EffectiveStatus</div>
<div class="t" style="left:1797.9px;top:500px;font-size:15.4px;transform:scaleX(0.909);">ID</div>
<div class="t" style="left:1797.9px;top:530px;font-size:15.4px;transform:scaleX(0.973);">LifetimeBudget</div>
<div class="t" style="left:1797.9px;top:560px;font-size:15.4px;transform:scaleX(0.962);">Name</div>
<div class="t" style="left:1797.9px;top:590px;font-size:15.4px;transform:scaleX(0.966);">Objective</div>
<div class="t" style="left:1797.9px;top:620px;font-size:15.4px;transform:scaleX(0.927);">SpendCap</div>
<div class="t" style="left:1797.9px;top:650px;font-size:15.4px;transform:scaleX(0.944);">StartTime</div>
<div class="t" style="left:1797.9px;top:680px;font-size:15.4px;transform:scaleX(0.916);">Status</div>
<div class="t" style="left:1797.9px;top:710px;font-size:15.4px;transform:scaleX(0.949);">StopTime</div>
<div class="t" style="left:1797.9px;top:740px;font-size:15.4px;transform:scaleX(0.958);">Target</div>
<div class="t" style="left:1797.9px;top:770px;font-size:15.4px;transform:scaleX(0.974);">UpdatedTime</div>
<svg class="b" style="left:1695px;top:156px" width="223" height="640" viewBox="1695 156 223 640"><path d="M1895 171.5l6.500 6.500-6.500 6.500M1901.5 171.5l6.500 6.500-6.500 6.500" fill="none" stroke="#252423" stroke-width="1.400"/><circle cx="1723.500" cy="225.500" r="5.800" fill="none" stroke="#605e5c" stroke-width="1.300"/><path d="M1727.700 229.700l5.300 5.300" stroke="#605e5c" stroke-width="1.300"/><path d="M1712 262l7 7 7-7" fill="none" stroke="#3b3a39" stroke-width="1.200"/><rect x="1732.500" y="260.500" width="14" height="13" rx="2.500" fill="none" stroke="#252423" stroke-width="1.200"/><path d="M1732.500 265h14M1732.500 269.500h14M1737.200 260.500v13M1741.800 260.500v13" stroke="#252423" stroke-width="1.100" fill="none"/><circle cx="1746.400" cy="274.500" r="7.500" fill="#117865" stroke="#f3f2f1" stroke-width="1"/><path d="M1743.300 275l2.300 2.300 4-4.300" fill="none" stroke="#fff" stroke-width="1.300"/><rect x="1750.700" y="290.7" width="13.600" height="13.600" rx="2" fill="#f3f2f1" stroke="#8a8886" stroke-width="1"/><rect x="1750.700" y="320.7" width="13.600" height="13.600" rx="2" fill="#f3f2f1" stroke="#8a8886" stroke-width="1"/><path d="M1788 322.5v-1.800h-11l5.800 6.800-5.800 6.800h11v-1.800" fill="none" stroke="#252423" stroke-width="1.300" stroke-linejoin="miter"/><rect x="1750.700" y="350.7" width="13.600" height="13.600" rx="2" fill="#f3f2f1" stroke="#8a8886" stroke-width="1"/><rect x="1750.700" y="380.7" width="13.600" height="13.600" rx="2" fill="#f3f2f1" stroke="#8a8886" stroke-width="1"/><rect x="1750.700" y="410.7" width="13.600" height="13.600" rx="2" fill="#f3f2f1" stroke="#8a8886" stroke-width="1"/><rect x="1775.700" y="410.5" width="13.800" height="13.800" rx="2.500" fill="none" stroke="#252423" stroke-width="1.200"/><path d="M1775.700 414.7h13.800" stroke="#252423" stroke-width="1.200"/><rect x="1778.6" y="417" width="1.500" height="1.500" fill="#252423"/><rect x="1781.9" y="417" width="1.500" height="1.500" fill="#252423"/><rect x="1785.2" y="417" width="1.500" height="1.500" fill="#252423"/><rect x="1778.6" y="420.2" width="1.500" height="1.500" fill="#252423"/><rect x="1781.9" y="420.2" width="1.500" height="1.500" fill="#252423"/><path d="M1733.500 411l6 6.500-6 6.500" fill="none" stroke="#3b3a39" stroke-width="1.200"/><rect x="1750.200" y="440.2" width="14.600" height="14.600" rx="2" fill="#117865"/><path d="M1753.300 447.8l3.200 3.200 5.700-6" fill="none" stroke="#fff" stroke-width="1.400"/><path d="M1788 442.5v-1.800h-11l5.800 6.800-5.800 6.800h11v-1.800" fill="none" stroke="#252423" stroke-width="1.300" stroke-linejoin="miter"/><rect x="1750.700" y="470.7" width="13.600" height="13.600" rx="2" fill="#f3f2f1" stroke="#8a8886" stroke-width="1"/><rect x="1750.700" y="500.7" width="13.600" height="13.600" rx="2" fill="#f3f2f1" stroke="#8a8886" stroke-width="1"/><rect x="1750.700" y="530.7" width="13.600" height="13.600" rx="2" fill="#f3f2f1" stroke="#8a8886" stroke-width="1"/><path d="M1788 532.5v-1.800h-11l5.800 6.800-5.800 6.800h11v-1.800" fill="none" stroke="#252423" stroke-width="1.300" stroke-linejoin="miter"/><rect x="1750.700" y="560.7" width="13.600" height="13.600" rx="2" fill="#f3f2f1" stroke="#8a8886" stroke-width="1"/><rect x="1750.200" y="590.2" width="14.600" height="14.600" rx="2" fill="#117865"/><path d="M1753.300 597.8l3.200 3.200 5.700-6" fill="none" stroke="#fff" stroke-width="1.400"/><rect x="1750.700" y="620.7" width="13.600" height="13.600" rx="2" fill="#f3f2f1" stroke="#8a8886" stroke-width="1"/><path d="M1788 622.5v-1.800h-11l5.800 6.800-5.800 6.800h11v-1.800" fill="none" stroke="#252423" stroke-width="1.300" stroke-linejoin="miter"/><rect x="1750.700" y="650.7" width="13.600" height="13.600" rx="2" fill="#f3f2f1" stroke="#8a8886" stroke-width="1"/><rect x="1775.700" y="650.5" width="13.800" height="13.800" rx="2.500" fill="none" stroke="#252423" stroke-width="1.200"/><path d="M1775.700 654.7h13.800" stroke="#252423" stroke-width="1.200"/><rect x="1778.6" y="657" width="1.500" height="1.500" fill="#252423"/><rect x="1781.9" y="657" width="1.500" height="1.500" fill="#252423"/><rect x="1785.2" y="657" width="1.500" height="1.500" fill="#252423"/><rect x="1778.6" y="660.2" width="1.500" height="1.500" fill="#252423"/><rect x="1781.9" y="660.2" width="1.500" height="1.500" fill="#252423"/><path d="M1733.500 651l6 6.500-6 6.500" fill="none" stroke="#3b3a39" stroke-width="1.200"/><rect x="1750.200" y="680.2" width="14.600" height="14.600" rx="2" fill="#117865"/><path d="M1753.300 687.8l3.200 3.200 5.700-6" fill="none" stroke="#fff" stroke-width="1.400"/><rect x="1750.700" y="710.7" width="13.600" height="13.600" rx="2" fill="#f3f2f1" stroke="#8a8886" stroke-width="1"/><rect x="1775.700" y="710.5" width="13.800" height="13.800" rx="2.500" fill="none" stroke="#252423" stroke-width="1.200"/><path d="M1775.700 714.7h13.800" stroke="#252423" stroke-width="1.200"/><rect x="1778.6" y="717" width="1.500" height="1.500" fill="#252423"/><rect x="1781.9" y="717" width="1.500" height="1.500" fill="#252423"/><rect x="1785.2" y="717" width="1.500" height="1.500" fill="#252423"/><rect x="1778.6" y="720.2" width="1.500" height="1.500" fill="#252423"/><rect x="1781.9" y="720.2" width="1.500" height="1.500" fill="#252423"/><path d="M1733.500 711l6 6.500-6 6.500" fill="none" stroke="#3b3a39" stroke-width="1.200"/><rect x="1750.700" y="740.7" width="13.600" height="13.600" rx="2" fill="#f3f2f1" stroke="#8a8886" stroke-width="1"/><rect x="1750.700" y="770.7" width="13.600" height="13.600" rx="2" fill="#f3f2f1" stroke="#8a8886" stroke-width="1"/><rect x="1775.700" y="770.5" width="13.800" height="13.800" rx="2.500" fill="none" stroke="#252423" stroke-width="1.200"/><path d="M1775.700 774.7h13.800" stroke="#252423" stroke-width="1.200"/><rect x="1778.6" y="777" width="1.500" height="1.500" fill="#252423"/><rect x="1781.9" y="777" width="1.500" height="1.500" fill="#252423"/><rect x="1785.2" y="777" width="1.500" height="1.500" fill="#252423"/><rect x="1778.6" y="780.2" width="1.500" height="1.500" fill="#252423"/><rect x="1781.9" y="780.2" width="1.500" height="1.500" fill="#252423"/><path d="M1733.500 771l6 6.500-6 6.500" fill="none" stroke="#3b3a39" stroke-width="1.200"/></svg>
<!-- bottom -->
<div class="b" style="left:52px;top:900px;width:1165px;height:45px;background:#f3f2f1;"></div>
<div class="b" style="left:0px;top:944px;width:1918px;height:1px;background:#e1dfdd;"></div>
<div class="b" style="left:0px;top:945px;width:1918px;height:28px;background:#f3f2f1;"></div>
<div class="b" style="left:64px;top:935px;width:30px;height:2.8px;background:#117865;border-radius:1.500px;"></div>
<div class="b" style="left:210px;top:900px;width:94.5px;height:44px;background:#fff;border-left:1px solid #8a8886;box-sizing:border-box;"></div>
<div class="b" style="left:210px;top:939px;width:94.5px;height:5px;background:#117865;"></div>
<div class="b" style="left:304.6px;top:900px;width:49.5px;height:43.7px;background:#117865;"></div>
<div class="t" style="left:236.2px;top:915px;font-size:15.4px;-webkit-text-stroke:0.4px #252423;transform:scaleX(0.889);">Page 1</div>
<div class="t" style="left:5.3px;top:953px;font-size:15.4px;color:#605e5c;transform:scaleX(0.928);">Page 1 of 1</div>
<div class="t" style="left:1825.2px;top:951px;font-size:15.4px;color:#605e5c;transform:scaleX(0.921);">73%</div>
<svg class="b" style="left:0;top:900px" width="1918" height="73" viewBox="0 900 1918 73"><rect x="66.500" y="909.500" width="22" height="13.500" rx="1" fill="none" stroke="#252423" stroke-width="1.300"/><path d="M77.500 923v3M73 926.500h9" stroke="#252423" stroke-width="1.300"/><rect x="126.300" y="907" width="14.500" height="23" rx="2" fill="none" stroke="#252423" stroke-width="1.300"/><path d="M132 926.500h3" stroke="#252423" stroke-width="1.300"/><path d="M174 916.500l-6 4.500 6 4.500z" fill="#c8c6c4"/><path d="M196.500 916.500l6 4.500-6 4.500z" fill="#c8c6c4"/><path d="M329.300 913.700v13.400M322.600 920.400h13.400" stroke="#fff" stroke-width="3.300"/><path d="M1655.500 958.800h5.800" stroke="#3b3a39" stroke-width="1.900"/><path d="M1667 959.400h125" stroke="#605e5c" stroke-width="1"/><rect x="1707.800" y="953" width="5" height="13" fill="#605e5c"/><path d="M1729.400 956v7" stroke="#605e5c" stroke-width="1"/><path d="M1798.700 959h9.700M1803.500 954.200v9.700" stroke="#3b3a39" stroke-width="1.900"/><rect x="1878.200" y="952.900" width="18.600" height="13.800" fill="none" stroke="#605e5c" stroke-width="1.300"/><path d="M1881 958.500v-3h3.500M1890.500 955.500h3.500v3M1894 961.500v3h-3.500M1884.500 964.500h-3.500v-3" fill="none" stroke="#3b3a39" stroke-width="1.200"/></svg>
<div class="b" style="left:0px;top:154px;width:1918px;height:5px;background:linear-gradient(rgba(0,0,0,0.13),rgba(0,0,0,0.04) 45%,rgba(0,0,0,0));"></div>
</body></html>
